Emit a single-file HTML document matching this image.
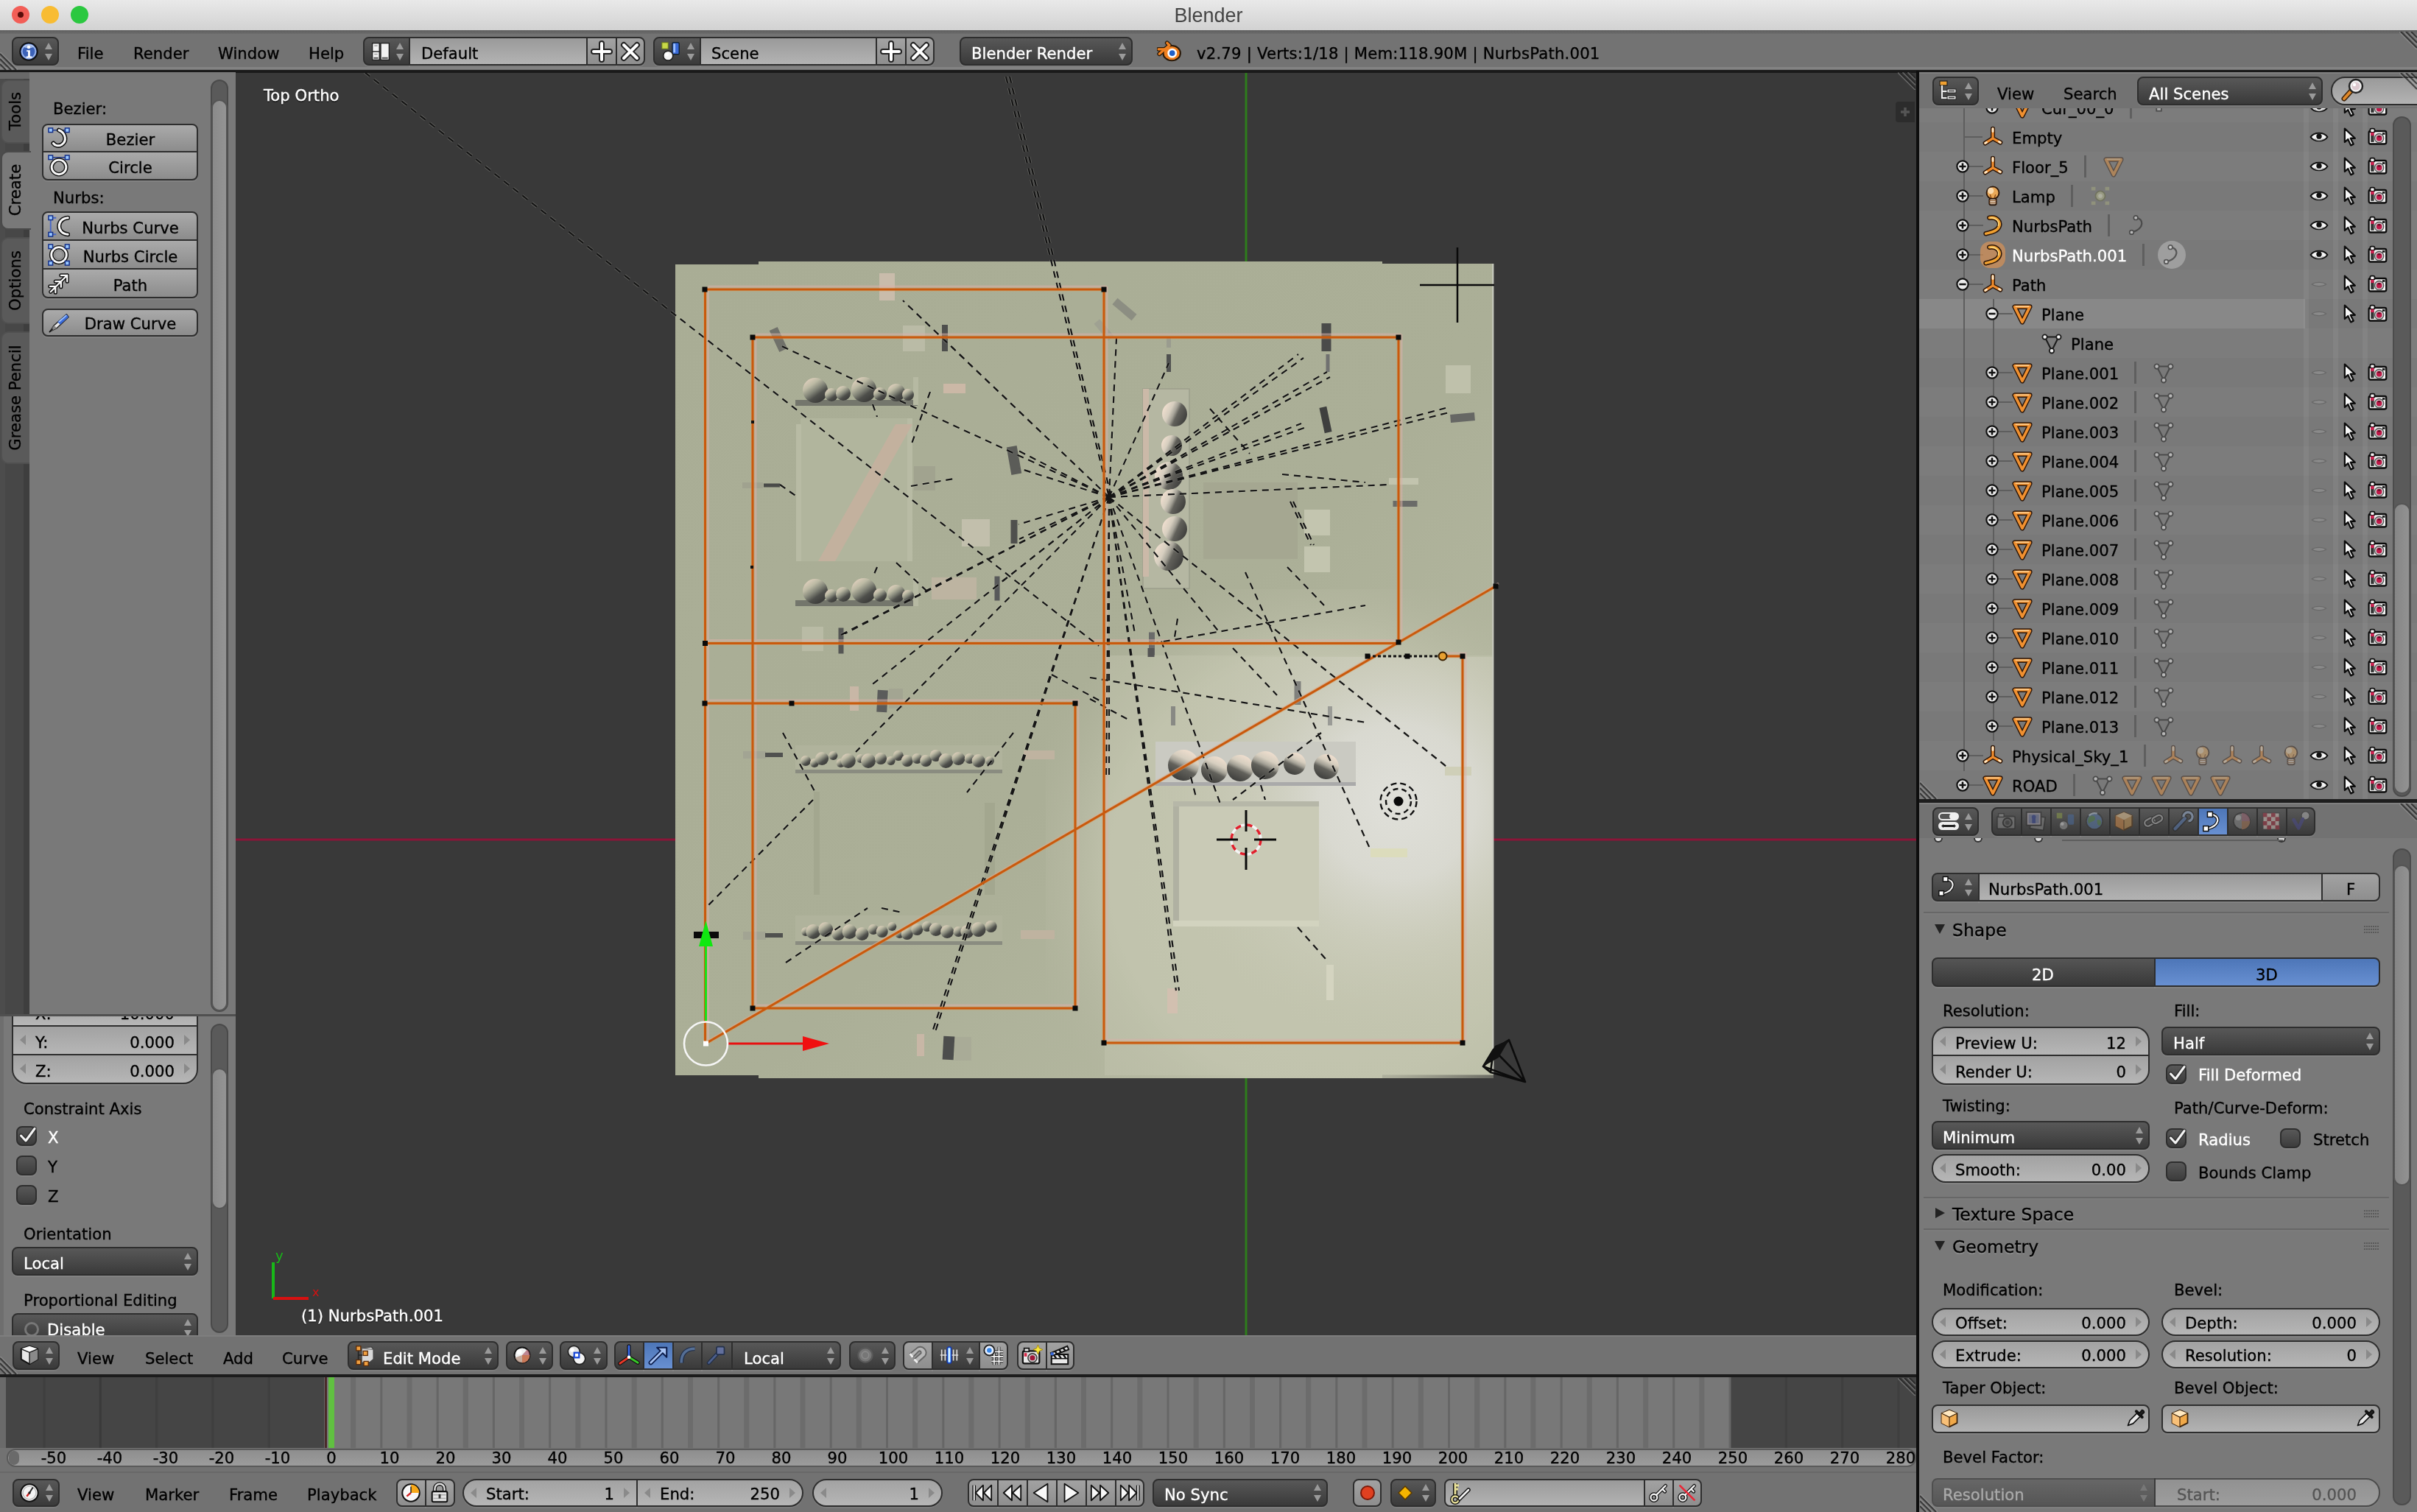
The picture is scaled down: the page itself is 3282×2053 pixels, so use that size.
<!DOCTYPE html><html><head><meta charset="utf-8"><title>Blender</title><style>
html,body{margin:0;padding:0;background:#727272}
body{width:3282px;height:2053px;position:relative;overflow:hidden;font-family:"DejaVu Sans","Liberation Sans",sans-serif;font-size:21.2px;color:#000}
#app{position:absolute;left:0;top:0;width:3282px;height:2053px;overflow:hidden;will-change:transform}
.a{position:absolute}
.t{white-space:nowrap;line-height:normal;-webkit-text-stroke:.35px}
.w{box-sizing:border-box;border:2px solid #2e2e2e;box-shadow:0 2px 0 rgba(255,255,255,.07)}
.tool{background:linear-gradient(#aaa,#8c8c8c)}
.reg{background:linear-gradient(#a2a2a2,#8e8e8e)}
.num{background:linear-gradient(#a2a2a2,#b6b6b6)}
.menu{background:linear-gradient(#585858,#3a3a3a)}
.txt{background:linear-gradient(#9a9a9a,#b3b3b3)}
.radio{background:linear-gradient(#555,#393939)}
.sel{background:linear-gradient(#4d76b8,#6890d2)}
.chk{background:linear-gradient(#585858,#3c3c3c);border-radius:8px}
.dis{opacity:.5}
.sh{text-shadow:0 2px 1px rgba(255,255,255,.18)}
.shd{text-shadow:0 2px 1px rgba(0,0,0,.45)}
</style></head><body><div id="app"><svg class="a" style="left:320px;top:98px;" width="2282" height="1718" viewBox="320 98 2282 1718"><defs><linearGradient id="sph" x1=".12" y1=".12" x2=".88" y2=".88"><stop offset="0" stop-color="#f2e0d0"/><stop offset=".3" stop-color="#d6cebf"/><stop offset=".47" stop-color="#a5a297"/><stop offset=".6" stop-color="#62615b"/><stop offset="1" stop-color="#3c3c3a"/></linearGradient><linearGradient id="sph2" x1=".15" y1=".05" x2=".8" y2=".95"><stop offset="0" stop-color="#e4d2c0"/><stop offset=".28" stop-color="#bcbaa4"/><stop offset=".5" stop-color="#85877a"/><stop offset=".7" stop-color="#4e4f4b"/><stop offset="1" stop-color="#383836"/></linearGradient><radialGradient id="glow" cx="1899" cy="1088" r="330" gradientUnits="userSpaceOnUse"><stop offset="0" stop-color="#e0e0da"/><stop offset=".32" stop-color="#dadad2" stop-opacity=".95"/><stop offset=".6" stop-color="#cfcfc0" stop-opacity=".6"/><stop offset="1" stop-color="#c4c5b0" stop-opacity="0"/></radialGradient><linearGradient id="pl" x1="0" y1="0" x2="1" y2="1"><stop offset="0" stop-color="#a9ad95"/><stop offset=".55" stop-color="#abaf97"/><stop offset="1" stop-color="#babda6"/></linearGradient><radialGradient id="quad" cx="1800" cy="1180" r="420" gradientUnits="userSpaceOnUse"><stop offset="0" stop-color="#c6c8b2"/><stop offset=".7" stop-color="#c2c4ae" stop-opacity=".85"/><stop offset="1" stop-color="#b4b6a0" stop-opacity="0"/></radialGradient></defs><rect x="320" y="98" width="2282" height="1718" fill="#393939"/><rect x="1690.5" y="98" width="3" height="1717" fill="#2e7d1c"/><rect x="320" y="1138.5" width="2282" height="3" fill="#8b1538"/><path d="M917 359 H1030 V355 H1877 V358 H2028 V1459 H1877 V1464 H1030 V1460 H917Z" fill="url(#pl)"/><rect x="1420" y="800" width="608" height="664" fill="url(#quad)"/><rect x="1500" y="890" width="528" height="570" fill="#c3c5af" opacity=".45"/><rect x="1500" y="892" width="528" height="568" fill="url(#glow)"/><rect x="1900" y="480" width="128" height="412" fill="url(#vg)"/><rect x="1500" y="640" width="400" height="232" fill="url(#vg)" opacity=".45"/><rect x="2026" y="358" width="2.5" height="1101" fill="#c9cac0" opacity=".8"/><rect x="1087" y="568" width="148" height="194" fill="#b1b59d"/><rect x="1081" y="576" width="7" height="186" fill="#b8bba4"/><rect x="1232" y="568" width="7" height="194" fill="#b8bba4"/><path d="M1111 762 L1134 762 L1239 576 L1216 576Z" fill="#c5b09f" opacity=".9"/><rect x="1634" y="655" width="128" height="104" fill="#a5a791"/><rect x="1105" y="1075" width="8" height="140" fill="#a3a78f"/><rect x="1337" y="1090" width="14" height="125" fill="#a3a78f"/><rect x="1593" y="1088" width="198" height="167" fill="#c9cab6"/><rect x="1593" y="1088" width="8" height="167" fill="#b0b1a2"/><rect x="1593" y="1088" width="198" height="7" fill="#b6b7a8"/><rect x="1593" y="1250" width="198" height="8" fill="#d2d3bf"/><rect x="1194" y="371" width="21" height="37" fill="#c9bcab"/><rect x="1226" y="442" width="30" height="35" fill="#babba6"/><rect x="1281" y="521" width="30" height="13" fill="#cbb8a6"/><rect x="1241" y="633" width="29" height="33" fill="#a1a38f"/><rect x="1306" y="705" width="38" height="37" fill="#c2bfac"/><rect x="1265" y="784" width="61" height="30" fill="#bdb4a1"/><rect x="1089" y="851" width="29" height="33" fill="#b9bba5"/><rect x="1963" y="496" width="34" height="38" fill="#bfc1ab"/><rect x="1771" y="692" width="35" height="35" fill="#c3c5af"/><rect x="1771" y="742" width="35" height="35" fill="#c3c5af"/><rect x="1886" y="649" width="40" height="9" fill="#c2c4ae"/><rect x="1154" y="932" width="12" height="33" fill="#c8b7a6"/><rect x="1207" y="935" width="19" height="27" fill="#a3a592"/><rect x="1245" y="1404" width="10" height="30" fill="#c8b7a6"/><rect x="1296" y="1408" width="23" height="32" fill="#a9ab97"/><rect x="1390" y="1019" width="42" height="12" fill="#bfb3a0"/><rect x="1386" y="1263" width="46" height="12" fill="#bfb3a0"/><rect x="1962" y="1041" width="36" height="12" fill="#cfcfb8"/><rect x="1861" y="1152" width="50" height="12" fill="#dcdcbc"/><rect x="1585" y="1342" width="14" height="34" fill="#d2c0b0"/><rect x="1801" y="1310" width="10" height="48" fill="#d4d4c0"/><rect x="1009" y="1020" width="31" height="10" fill="#a2a493"/><rect x="1009" y="1265" width="31" height="11" fill="#a2a493"/><rect x="1008" y="655" width="28" height="8" fill="#a0a28f"/><rect x="1080" y="543" width="166" height="8" fill="#74766c"/><rect x="1240" y="512" width="7" height="38" fill="#b6b9a2"/><rect x="1080" y="815" width="166" height="8" fill="#74766c"/><rect x="1240" y="785" width="7" height="38" fill="#b6b9a2"/><rect x="1080" y="1012" width="281" height="36" fill="#b0b39c"/><rect x="1080" y="1045" width="281" height="5" fill="#8a8c80"/><rect x="1080" y="1243" width="281" height="38" fill="#b0b39c"/><rect x="1080" y="1278" width="281" height="5" fill="#8a8c80"/><rect x="1552" y="528" width="63" height="271" fill="#b5b7a2" stroke="#9d9f8c" stroke-width="1.5"/><rect x="1552" y="528" width="8" height="255" fill="#cbb9a8"/><rect x="1569" y="1007" width="272" height="59" fill="#cacac2"/><rect x="1569" y="1062" width="272" height="5" fill="#aaa"/><circle cx="1107" cy="530" r="17" fill="url(#sph2)"/><circle cx="1129" cy="536" r="9" fill="url(#sph2)"/><circle cx="1145" cy="534" r="10" fill="url(#sph2)"/><circle cx="1173" cy="529" r="17" fill="url(#sph2)"/><circle cx="1195" cy="535" r="9" fill="url(#sph2)"/><circle cx="1217" cy="533" r="12" fill="url(#sph2)"/><circle cx="1233" cy="536" r="8" fill="url(#sph2)"/><circle cx="1107" cy="803" r="17" fill="url(#sph2)"/><circle cx="1129" cy="809" r="9" fill="url(#sph2)"/><circle cx="1145" cy="807" r="10" fill="url(#sph2)"/><circle cx="1173" cy="802" r="17" fill="url(#sph2)"/><circle cx="1195" cy="808" r="9" fill="url(#sph2)"/><circle cx="1217" cy="806" r="12" fill="url(#sph2)"/><circle cx="1233" cy="809" r="8" fill="url(#sph2)"/><circle cx="1094" cy="1033" r="7" fill="url(#sph2)"/><circle cx="1105.9" cy="1036" r="6" fill="url(#sph2)"/><circle cx="1116.1000000000001" cy="1030" r="9" fill="url(#sph2)"/><circle cx="1131.4" cy="1026" r="6" fill="url(#sph2)"/><circle cx="1141.6000000000001" cy="1036" r="6" fill="url(#sph2)"/><circle cx="1151.8000000000002" cy="1033" r="10" fill="url(#sph2)"/><circle cx="1168.8000000000002" cy="1030" r="6" fill="url(#sph2)"/><circle cx="1179.0000000000002" cy="1033" r="10" fill="url(#sph2)"/><circle cx="1196.0000000000002" cy="1030" r="8" fill="url(#sph2)"/><circle cx="1209.6000000000001" cy="1033" r="6" fill="url(#sph2)"/><circle cx="1219.8000000000002" cy="1026" r="7" fill="url(#sph2)"/><circle cx="1231.7000000000003" cy="1033" r="8" fill="url(#sph2)"/><circle cx="1245.3000000000002" cy="1030" r="7" fill="url(#sph2)"/><circle cx="1257.2000000000003" cy="1033" r="8" fill="url(#sph2)"/><circle cx="1270.8000000000002" cy="1026" r="8" fill="url(#sph2)"/><circle cx="1284.4" cy="1033" r="10" fill="url(#sph2)"/><circle cx="1301.4" cy="1030" r="9" fill="url(#sph2)"/><circle cx="1316.7" cy="1030" r="7" fill="url(#sph2)"/><circle cx="1328.6000000000001" cy="1033" r="9" fill="url(#sph2)"/><circle cx="1343.9" cy="1033" r="6" fill="url(#sph2)"/><circle cx="1094" cy="1265" r="6" fill="url(#sph2)"/><circle cx="1104.2" cy="1265" r="10" fill="url(#sph2)"/><circle cx="1121.2" cy="1262" r="10" fill="url(#sph2)"/><circle cx="1138.2" cy="1268" r="9" fill="url(#sph2)"/><circle cx="1153.5" cy="1265" r="10" fill="url(#sph2)"/><circle cx="1170.5" cy="1268" r="9" fill="url(#sph2)"/><circle cx="1185.8" cy="1262" r="7" fill="url(#sph2)"/><circle cx="1197.7" cy="1265" r="8" fill="url(#sph2)"/><circle cx="1211.3" cy="1258" r="6" fill="url(#sph2)"/><circle cx="1221.5" cy="1268" r="6" fill="url(#sph2)"/><circle cx="1231.7" cy="1268" r="8" fill="url(#sph2)"/><circle cx="1245.3" cy="1262" r="8" fill="url(#sph2)"/><circle cx="1258.8999999999999" cy="1258" r="7" fill="url(#sph2)"/><circle cx="1270.8" cy="1262" r="9" fill="url(#sph2)"/><circle cx="1286.1" cy="1265" r="9" fill="url(#sph2)"/><circle cx="1301.3999999999999" cy="1265" r="7" fill="url(#sph2)"/><circle cx="1313.3" cy="1265" r="9" fill="url(#sph2)"/><circle cx="1328.6" cy="1262" r="10" fill="url(#sph2)"/><circle cx="1345.6" cy="1258" r="8" fill="url(#sph2)"/><circle cx="1595" cy="562" r="17" fill="url(#sph)" transform="rotate(-20 1595 562)"/><circle cx="1591" cy="605" r="14" fill="url(#sph)" transform="rotate(-20 1591 605)"/><circle cx="1587" cy="646" r="19" fill="url(#sph)" transform="rotate(-20 1587 646)"/><circle cx="1593" cy="681" r="17" fill="url(#sph)" transform="rotate(-20 1593 681)"/><circle cx="1595" cy="718" r="17" fill="url(#sph)" transform="rotate(-20 1595 718)"/><circle cx="1587" cy="755" r="20" fill="url(#sph)" transform="rotate(-20 1587 755)"/><circle cx="1607" cy="1039" r="21" fill="url(#sph)" transform="rotate(70 1607 1039)"/><circle cx="1649" cy="1045" r="18" fill="url(#sph)" transform="rotate(70 1649 1045)"/><circle cx="1684" cy="1043" r="18" fill="url(#sph)" transform="rotate(70 1684 1043)"/><circle cx="1718" cy="1039" r="19" fill="url(#sph)" transform="rotate(70 1718 1039)"/><circle cx="1758" cy="1037" r="15" fill="url(#sph)" transform="rotate(70 1758 1037)"/><circle cx="1801" cy="1041" r="17" fill="url(#sph)" transform="rotate(70 1801 1041)"/><rect x="1051.0" y="445.0" width="12" height="32" fill="#70716a" transform="rotate(-25 1057 461)"/><rect x="1279.0" y="441.0" width="8" height="36" fill="#4e4f4d" transform="rotate(0 1283 459)"/><rect x="1370.0" y="606.0" width="14" height="38" fill="#5b5c58" transform="rotate(-10 1377 625)"/><rect x="1372.5" y="706.0" width="9" height="32" fill="#4f504d" transform="rotate(0 1377 722)"/><rect x="1350.5" y="782.5" width="7" height="33" fill="#58595a" transform="rotate(0 1354 799)"/><rect x="1138.5" y="852.5" width="7" height="35" fill="#555654" transform="rotate(0 1142 870)"/><rect x="1037.0" y="656.5" width="22" height="5" fill="#4a4b49" transform="rotate(0 1048 659)"/><rect x="1521.5" y="403.0" width="11" height="34" fill="#8c8e82" transform="rotate(-50 1527 420)"/><rect x="1584.0" y="481.0" width="6" height="24" fill="#505150" transform="rotate(0 1587 493)"/><rect x="1584.0" y="458.0" width="6" height="14" fill="#9a9c8f" transform="rotate(0 1587 465)"/><rect x="1794.5" y="439.0" width="13" height="38" fill="#4a4b4a" transform="rotate(0 1801 458)"/><rect x="1800.5" y="481.0" width="5" height="24" fill="#707170" transform="rotate(0 1803 493)"/><rect x="1795.0" y="552.5" width="10" height="35" fill="#3e3f3e" transform="rotate(-12 1800 570)"/><rect x="1969.5" y="561.5" width="33" height="11" fill="#666764" transform="rotate(-5 1986 567)"/><rect x="1891.5" y="680.0" width="33" height="8" fill="#6a6b68" transform="rotate(0 1908 684)"/><rect x="1560.0" y="858.5" width="8" height="31" fill="#6a6b6a" transform="rotate(0 1564 874)"/><rect x="1039.0" y="1022.0" width="24" height="6" fill="#50514f" transform="rotate(0 1051 1025)"/><rect x="1039.0" y="1267.0" width="24" height="6" fill="#50514f" transform="rotate(0 1051 1270)"/><rect x="1191.0" y="937.0" width="14" height="30" fill="#5b5c5b" transform="rotate(3 1198 952)"/><rect x="1280.5" y="1407.0" width="15" height="32" fill="#4c4d4c" transform="rotate(3 1288 1423)"/><rect x="1558.5" y="880.0" width="9" height="12" fill="#555" transform="rotate(0 1563 886)"/><rect x="1590.0" y="959.0" width="6" height="26" fill="#888984" transform="rotate(0 1593 972)"/><rect x="1757.5" y="925.0" width="9" height="32" fill="#80817d" transform="rotate(0 1762 941)"/><rect x="1803.0" y="959.0" width="6" height="26" fill="#9a9b96" transform="rotate(0 1806 972)"/><rect x="1494.0" y="433.0" width="10" height="30" fill="#9fa192" transform="rotate(-40 1499 448)"/><path d="M957.5 393H1499 M957.5 393V1417 M1022 458H1899 M1022 458V1370 M1499 393V1416 M1899 458V872 M957.5 873.5H1899 M957 955H1460V1369H1022 M1499 1416H1986V891H1959 M958 1417L2031 796" transform="translate(4,-4)" stroke="#d8b0a8" stroke-width="3" fill="none" opacity=".55"/><path d="M495 98L1492 877M1366 104L1506 675M1371 104L1509 675M1506 675L1057 468M1506 675L1283 462M1506 675L1226 408M1506 675L1248 807M1506 675L1142 862M1506 675L1763 481M1506 675L1802 505M1506 675L1765 534M1506 675L1767 575M1506 675L1963 554M1506 675L1886 658M1506 675L1587 493M1506 675L1516 459M1506 675L1962 1039M1506 675L1597 1345M1506 675L1601 1345M1506 675L1265 1404M1506 675L1269 1404M1506 675L1658 1094M1506 675L1162 1021M1506 675L1181 932M1506 675L1506 1055M1506 675L1502 1055M1506 675L1541 860M1506 675L1657 860M1506 675L1383 612M1506 675L1384 636M1506 675L1383 712M1506 675L1384 732M1506 675L1360 790M1506 675L1148 860M1506 675L1770 486M1506 675L1806 512M1506 675L1771 581M1506 675L1968 560M1506 675L1968 1044M1263 532L1237 605M1237 660L1295 650M1059 658L1083 675M1185 549L1191 566M1191 770L1185 784M1217 764L1259 803M1643 555L1697 616M1741 644L1854 655M1752 681L1780 740M1756 681L1784 740M1748 770L1798 822M1691 777L1861 1154M1564 874L1854 822M1063 995L1106 1074M1104 1086L960 1231M1376 995L1313 1076M1428 916L1500 955M1067 1307L1178 1233M1480 920L1855 981M1480 949L1532 977M1674 880L1734 944M1794 995L1674 1086M1762 1259L1801 1303M1617 1055L1625 1086M1712 1066L1718 1086M1599 840L1595 865M1197 1233L1225 1239" stroke="#dcdcd0" stroke-width="4" fill="none" stroke-dasharray="9 7" opacity=".25"/><path d="M495 98L1492 877M1366 104L1506 675M1371 104L1509 675M1506 675L1057 468M1506 675L1283 462M1506 675L1226 408M1506 675L1248 807M1506 675L1142 862M1506 675L1763 481M1506 675L1802 505M1506 675L1765 534M1506 675L1767 575M1506 675L1963 554M1506 675L1886 658M1506 675L1587 493M1506 675L1516 459M1506 675L1962 1039M1506 675L1597 1345M1506 675L1601 1345M1506 675L1265 1404M1506 675L1269 1404M1506 675L1658 1094M1506 675L1162 1021M1506 675L1181 932M1506 675L1506 1055M1506 675L1502 1055M1506 675L1541 860M1506 675L1657 860M1506 675L1383 612M1506 675L1384 636M1506 675L1383 712M1506 675L1384 732M1506 675L1360 790M1506 675L1148 860M1506 675L1770 486M1506 675L1806 512M1506 675L1771 581M1506 675L1968 560M1506 675L1968 1044M1263 532L1237 605M1237 660L1295 650M1059 658L1083 675M1185 549L1191 566M1191 770L1185 784M1217 764L1259 803M1643 555L1697 616M1741 644L1854 655M1752 681L1780 740M1756 681L1784 740M1748 770L1798 822M1691 777L1861 1154M1564 874L1854 822M1063 995L1106 1074M1104 1086L960 1231M1376 995L1313 1076M1428 916L1500 955M1067 1307L1178 1233M1480 920L1855 981M1480 949L1532 977M1674 880L1734 944M1794 995L1674 1086M1762 1259L1801 1303M1617 1055L1625 1086M1712 1066L1718 1086M1599 840L1595 865M1197 1233L1225 1239" stroke="#151515" stroke-width="2.2" fill="none" stroke-dasharray="9 7"/><path d="M957.5 393H1499 M957.5 393V1417 M1022 458H1899 M1022 458V1370 M1499 393V1416 M1899 458V872 M957.5 873.5H1899 M957 955H1460V1369H1022 M1499 1416H1986V891H1959 M958 1417L2031 796" stroke="#d8a060" stroke-width="5" fill="none" opacity=".45"/><path d="M957.5 393H1499 M957.5 393V1417 M1022 458H1899 M1022 458V1370 M1499 393V1416 M1899 458V872 M957.5 873.5H1899 M957 955H1460V1369H1022 M1499 1416H1986V891H1959 M958 1417L2031 796" stroke="#c9590d" stroke-width="3" fill="none"/><path d="M1857 891H1959" stroke="#111" stroke-width="3" stroke-dasharray="4 3"/><circle cx="1959" cy="891" r="5.5" fill="#e8a030" stroke="#3a2000" stroke-width="2"/><rect x="953.5" y="389.5" width="7" height="7" fill="#0a0a0a"/><rect x="1495.5" y="389.5" width="7" height="7" fill="#0a0a0a"/><rect x="1018.5" y="454.5" width="7" height="7" fill="#0a0a0a"/><rect x="1895.5" y="454.5" width="7" height="7" fill="#0a0a0a"/><rect x="1895.5" y="868.5" width="7" height="7" fill="#0a0a0a"/><rect x="954.0" y="870.0" width="7" height="7" fill="#0a0a0a"/><rect x="953.5" y="951.5" width="7" height="7" fill="#0a0a0a"/><rect x="1456.5" y="951.5" width="7" height="7" fill="#0a0a0a"/><rect x="1456.5" y="1365.5" width="7" height="7" fill="#0a0a0a"/><rect x="1018.5" y="1365.5" width="7" height="7" fill="#0a0a0a"/><rect x="1495.5" y="1412.5" width="7" height="7" fill="#0a0a0a"/><rect x="1982.5" y="1412.5" width="7" height="7" fill="#0a0a0a"/><rect x="1982.5" y="887.5" width="7" height="7" fill="#0a0a0a"/><rect x="1853.5" y="887.5" width="7" height="7" fill="#0a0a0a"/><rect x="1907.5" y="887.5" width="7" height="7" fill="#0a0a0a"/><rect x="2027.5" y="792.5" width="7" height="7" fill="#0a0a0a"/><rect x="1071.5" y="951.5" width="7" height="7" fill="#0a0a0a"/><rect x="1020" y="571" width="4" height="4" fill="#111"/><rect x="1019" y="768" width="4" height="4" fill="#111"/><path d="M1928 387H2029M1979 336V438" stroke="#0a0a0a" stroke-width="2.5"/><circle cx="1692" cy="1140" r="20" fill="none" stroke="#f4f4f4" stroke-width="3.5"/><circle cx="1692" cy="1140" r="20" fill="none" stroke="#e0202c" stroke-width="3.5" stroke-dasharray="8 7.7"/><path d="M1652 1140H1681M1703 1140H1733M1692 1100V1129M1692 1151V1181" stroke="#0a0a0a" stroke-width="3"/><circle cx="1899" cy="1088" r="6.5" fill="#0a0a0a"/><circle cx="1899" cy="1088" r="17" fill="none" stroke="#111" stroke-width="2.4" stroke-dasharray="7 5"/><circle cx="1899" cy="1088" r="24.5" fill="none" stroke="#111" stroke-width="2.4" stroke-dasharray="8 5"/><path d="M2014 1448L2049 1412L2071 1469ZM2014 1448L2028 1425L2049 1412M2014 1448L2024 1456L2071 1469M2028 1425L2024 1456M2028 1425 L2071 1469" stroke="#0c0c0c" stroke-width="2.6" fill="none" stroke-linejoin="round"/><path d="M2014 1448L2030 1420L2049 1412L2035 1436Z" fill="#111"/><rect x="942" y="1265" width="34" height="9" fill="#0a0a0a"/><path d="M958.5 1386V1284" stroke="#18e018" stroke-width="3"/><path d="M949 1285L968 1285L958.5 1250Z" fill="#10e810"/><path d="M989 1417H1092" stroke="#e81010" stroke-width="3"/><path d="M1090 1407V1427L1126 1417Z" fill="#f01010"/><circle cx="958.5" cy="1417" r="29.5" fill="none" stroke="#f6f6f6" stroke-width="2.6"/><rect x="955" y="1413.5" width="7" height="7" fill="#fff"/><path d="M371 1763V1714" stroke="#18b818" stroke-width="4"/><path d="M371 1763H419" stroke="#d81010" stroke-width="4"/><text x="374" y="1711" font-size="18" fill="#18b818" font-family="DejaVu Sans,sans-serif">y</text><text x="424" y="1760" font-size="16" fill="#d81010" font-family="DejaVu Sans,sans-serif">x</text></svg><div class="a t shd" style="left:358px;top:117px;color:#fff;">Top Ortho</div><div class="a t shd" style="left:409px;top:1774px;color:#fff;">(1) NurbsPath.001</div><div class="a " style="left:2574px;top:138px;width:26px;height:28px;background:#2c2c2c;border-radius:4px 0 0 4px"></div><svg class="a" style="left:2579px;top:144px;" width="16" height="16" viewBox="0 0 16 16"><path d="M8 2V14M2 8H14" stroke="#555" stroke-width="3.5"/></svg><div class="a " style="left:0px;top:0px;width:3282px;height:41px;background:linear-gradient(#e9e9e9,#d2d2d2)"></div><div class="a " style="left:16px;top:8px;width:24px;height:24px;border-radius:12px;background:#f25e57"></div><div class="a " style="left:56px;top:8px;width:24px;height:24px;border-radius:12px;background:#f8bc33"></div><div class="a " style="left:96px;top:8px;width:24px;height:24px;border-radius:12px;background:#2bc840"></div><div class="a " style="left:24px;top:16px;width:8px;height:8px;border-radius:4px;background:#5a0d0a"></div><div class="a t" style="left:1241px;width:800px;text-align:center;top:6px;-webkit-text-stroke:0;font-family:'Liberation Sans',sans-serif;font-size:27px;color:#444">Blender</div><div class="a " style="left:0px;top:41px;width:3282px;height:55px;background:#737373"></div><div class="a " style="left:0px;top:41px;width:3282px;height:5px;background:linear-gradient(#5e5e5e,#6c6c6c)"></div><div class="a " style="left:0px;top:91px;width:3282px;height:3px;background:#838383"></div><div class="a " style="left:0px;top:95px;width:3282px;height:4px;background:#1a1a1a"></div><div class="a w menu" style="left:16px;top:50px;width:64px;height:39px;border-radius:8px;"></div><svg class="a" style="left:60px;top:57px" width="12" height="26" viewBox="0 0 12 26"><path d="M6 1 L11 10 L1 10Z M6 25 L11 16 L1 16Z" fill="#9a9a9a"/></svg><svg class="a" style="left:24px;top:55px;" width="30" height="30" viewBox="0 0 32 32"><circle cx="16" cy="16" r="12.5" fill="#3c62b8" stroke="#111" stroke-width="2.2"/><circle cx="16" cy="16" r="10" fill="none" stroke="#9ab4ea" stroke-width="2"/><path d="M8 9A11 11 0 0 1 24 9Q16 13 8 9Z" fill="#c8d8f8" opacity=".7"/><circle cx="16" cy="9.5" r="2.4" fill="#fff"/><path d="M13 14H18V23H20.5V25H12.5V23H15V16H13Z" fill="#fff"/></svg><div class="a t " style="left:105px;top:60px;">File</div><div class="a t " style="left:181px;top:60px;">Render</div><div class="a t " style="left:296px;top:60px;">Window</div><div class="a t " style="left:419px;top:60px;">Help</div><div class="a w menu" style="left:493px;top:50px;width:64px;height:39px;border-radius:8px 0 0 8px;"></div><svg class="a" style="left:537px;top:57px" width="12" height="26" viewBox="0 0 12 26"><path d="M6 1 L11 10 L1 10Z M6 25 L11 16 L1 16Z" fill="#9a9a9a"/></svg><svg class="a" style="left:503px;top:56px;" width="28" height="28" viewBox="0 0 32 32"><rect x="3" y="3" width="11" height="26" fill="#f2f2f2" stroke="#222" stroke-width="1.6"/><rect x="16" y="3" width="13" height="26" fill="#f2f2f2" stroke="#222" stroke-width="1.6"/><path d="M3 16H14" stroke="#222" stroke-width="1.6"/><path d="M5 26H12M18 26H27" stroke="#555" stroke-width="2.5"/><path d="M6 7H11M6 20H11" stroke="#aaa" stroke-width="2"/></svg><div class="a w txt" style="left:555px;top:50px;width:243px;height:39px;border-radius:0;"></div><div class="a t " style="left:572px;top:60px;">Default</div><div class="a w reg" style="left:796px;top:50px;width:42px;height:39px;border-radius:0;"></div><div class="a w reg" style="left:836px;top:50px;width:40px;height:39px;border-radius:0 8px 8px 0;"></div><div class="a w menu" style="left:887px;top:50px;width:65px;height:39px;border-radius:8px 0 0 8px;"></div><svg class="a" style="left:932px;top:57px" width="12" height="26" viewBox="0 0 12 26"><path d="M6 1 L11 10 L1 10Z M6 25 L11 16 L1 16Z" fill="#9a9a9a"/></svg><svg class="a" style="left:896px;top:55px;" width="30" height="30" viewBox="0 0 32 32"><rect x="3" y="3" width="9" height="9" fill="#c8d848" stroke="#6a7a18" stroke-width="1"/><rect x="18" y="3" width="10" height="17" rx="2" fill="#3a6ad8" stroke="#123" stroke-width="1.5"/><rect x="19.5" y="4.5" width="3" height="13" fill="#9ac0ff"/><circle cx="12" cy="22" r="7" fill="#f4f4f4" stroke="#222" stroke-width="1.8"/><circle cx="10" cy="20" r="2.8" fill="#fff"/></svg><div class="a w txt" style="left:950px;top:50px;width:241px;height:39px;border-radius:0;"></div><div class="a t " style="left:966px;top:60px;">Scene</div><div class="a w reg" style="left:1189px;top:50px;width:42px;height:39px;border-radius:0;"></div><div class="a w reg" style="left:1229px;top:50px;width:40px;height:39px;border-radius:0 8px 8px 0;"></div><svg class="a" style="left:802px;top:55px;" width="30" height="30" viewBox="0 0 30 30"><path d="M15 4V26M4 15H26" stroke="#222" stroke-width="8" stroke-linecap="round"/><path d="M15 4V26M4 15H26" stroke="#fff" stroke-width="4" stroke-linecap="round"/></svg><svg class="a" style="left:1195px;top:55px;" width="30" height="30" viewBox="0 0 30 30"><path d="M15 4V26M4 15H26" stroke="#222" stroke-width="8" stroke-linecap="round"/><path d="M15 4V26M4 15H26" stroke="#fff" stroke-width="4" stroke-linecap="round"/></svg><svg class="a" style="left:841px;top:55px;" width="30" height="30" viewBox="0 0 30 30"><path d="M6 6L24 24M24 6L6 24" stroke="#222" stroke-width="8" stroke-linecap="round"/><path d="M6 6L24 24M24 6L6 24" stroke="#fff" stroke-width="4" stroke-linecap="round"/></svg><svg class="a" style="left:1234px;top:55px;" width="30" height="30" viewBox="0 0 30 30"><path d="M6 6L24 24M24 6L6 24" stroke="#222" stroke-width="8" stroke-linecap="round"/><path d="M6 6L24 24M24 6L6 24" stroke="#fff" stroke-width="4" stroke-linecap="round"/></svg><div class="a w menu" style="left:1303px;top:50px;width:235px;height:39px;border-radius:8px;"></div><div class="a t " style="left:1319px;top:60px;color:#fff;">Blender Render</div><svg class="a" style="left:1518px;top:57px" width="12" height="26" viewBox="0 0 12 26"><path d="M6 1 L11 10 L1 10Z M6 25 L11 16 L1 16Z" fill="#9a9a9a"/></svg><svg class="a" style="left:1571px;top:53px;" width="34" height="34" viewBox="0 0 32 32"><path d="M3 19L16 8L13 5" stroke="#2a1a0a" stroke-width="5.5" fill="none" stroke-linecap="round" stroke-linejoin="round"/><path d="M2 13H14" stroke="#2a1a0a" stroke-width="5.5" stroke-linecap="round"/><ellipse cx="19" cy="18" rx="11" ry="9.5" fill="#f08020" stroke="#2a1a0a" stroke-width="2"/><path d="M3 19L16 8L13 5" stroke="#f08020" stroke-width="3" fill="none" stroke-linecap="round" stroke-linejoin="round"/><path d="M2 13H14" stroke="#f08020" stroke-width="3" stroke-linecap="round"/><circle cx="19.5" cy="18" r="6" fill="#fff"/><circle cx="19.5" cy="18" r="3.6" fill="#2060c8"/></svg><div class="a t " style="left:1625px;top:60px;letter-spacing:.2px">v2.79 | Verts:1/18 | Mem:118.90M | NurbsPath.001</div><div class="a " style="left:0px;top:98px;width:320px;height:1280px;background:#797979"></div><div class="a " style="left:0px;top:98px;width:40px;height:1280px;background:#474747"></div><div class="a " style="left:0px;top:98px;width:7px;height:1280px;background:#4c4c4c"></div><div class="a " style="left:32px;top:98px;width:8px;height:1280px;background:#3e3e3e"></div><div class="a " style="left:0px;top:98px;width:40px;height:9px;background:#686868"></div><div class="a " style="left:1px;top:108px;width:39px;height:87px;background:#5a5a5a;border-radius:10px 0 0 10px;border:2px solid #505050;border-right:none;box-sizing:border-box"></div><div class="a t" style="left:-129.5px;top:136px;width:300px;height:30px;line-height:30px;text-align:center;transform:rotate(-90deg);color:#000">Tools</div><div class="a " style="left:1px;top:205px;width:41px;height:107px;background:#797979;border-radius:10px 0 0 10px;border:2px solid #4a4a4a;border-right:none;box-sizing:border-box"></div><div class="a t" style="left:-129.5px;top:243px;width:300px;height:30px;line-height:30px;text-align:center;transform:rotate(-90deg);color:#000">Create</div><div class="a " style="left:1px;top:322px;width:39px;height:118px;background:#5a5a5a;border-radius:10px 0 0 10px;border:2px solid #505050;border-right:none;box-sizing:border-box"></div><div class="a t" style="left:-129.5px;top:366px;width:300px;height:30px;line-height:30px;text-align:center;transform:rotate(-90deg);color:#000">Options</div><div class="a " style="left:1px;top:450px;width:39px;height:180px;background:#5a5a5a;border-radius:10px 0 0 10px;border:2px solid #505050;border-right:none;box-sizing:border-box"></div><div class="a t" style="left:-129.5px;top:525px;width:300px;height:30px;line-height:30px;text-align:center;transform:rotate(-90deg);color:#000">Grease Pencil</div><div class="a " style="left:286px;top:108px;width:24px;height:1266px;background:#5a5a5a;border-radius:12px;border:2px solid #4a4a4a;box-sizing:border-box"></div><div class="a " style="left:287px;top:135px;width:22px;height:1238px;background:linear-gradient(90deg,#8a8a8a,#949494);border-radius:11px;border:2px solid #555;box-sizing:border-box"></div><div class="a t " style="left:72px;top:135px;">Bezier:</div><div class="a w tool" style="left:57px;top:168px;width:212px;height:39px;border-radius:8px 8px 0 0;"></div><svg class="a" style="left:65px;top:172.5px;" width="30" height="30" viewBox="0 0 32 32"><path d="M3.5 4H28.5" stroke="#14308a" stroke-width="1.4"/><path d="M16 4C26 8 28 20 20 25C15 28 10 26 8 23" stroke="#111" stroke-width="6.5" fill="none" stroke-linecap="round"/><path d="M16 4C26 8 28 20 20 25C15 28 10 26 8 23" stroke="#fafafa" stroke-width="3.2" fill="none" stroke-linecap="round"/><g fill="#9ac8ff" stroke="#14308a" stroke-width="1.6"><rect x="1" y="1" width="6" height="6"/><rect x="25" y="1" width="6" height="6"/></g></svg><div class="a t " style="left:-223px;width:800px;text-align:center;top:177px;">Bezier</div><div class="a w tool" style="left:57px;top:205px;width:212px;height:40px;border-radius:0 0 8px 8px;"></div><svg class="a" style="left:65px;top:210px;" width="30" height="30" viewBox="0 0 32 32"><path d="M3.5 4H28.5" stroke="#14308a" stroke-width="1.4"/><circle cx="16" cy="18" r="10.5" fill="none" stroke="#111" stroke-width="6"/><circle cx="16" cy="18" r="10.5" fill="none" stroke="#fafafa" stroke-width="3"/><g fill="#9ac8ff" stroke="#14308a" stroke-width="1.6"><rect x="1" y="1" width="6" height="6"/><rect x="25" y="1" width="6" height="6"/></g></svg><div class="a t " style="left:-223px;width:800px;text-align:center;top:215px;">Circle</div><div class="a t " style="left:72px;top:256px;">Nurbs:</div><div class="a w tool" style="left:57px;top:287px;width:212px;height:40px;border-radius:8px 8px 0 0;"></div><svg class="a" style="left:65px;top:292px;" width="30" height="30" viewBox="0 0 32 32"><path d="M4 4V28M4 4H12M4 28H12" stroke="#4868c8" stroke-width="2" fill="none"/><path d="M29 4C12 5 12 27 29 28" stroke="#111" stroke-width="6.5" fill="none" stroke-linecap="round"/><path d="M29 4C12 5 12 27 29 28" stroke="#fafafa" stroke-width="3.2" fill="none" stroke-linecap="round"/><g fill="#9ac8ff" stroke="#14308a" stroke-width="1.6"><rect x="1" y="1" width="6" height="6"/><rect x="1" y="25" width="6" height="6"/></g></svg><div class="a t " style="left:-223px;width:800px;text-align:center;top:297px;">Nurbs Curve</div><div class="a w tool" style="left:57px;top:325px;width:212px;height:41px;border-radius:0;"></div><svg class="a" style="left:65px;top:330.5px;" width="30" height="30" viewBox="0 0 32 32"><circle cx="16" cy="16" r="11" fill="none" stroke="#111" stroke-width="6"/><circle cx="16" cy="16" r="11" fill="none" stroke="#fafafa" stroke-width="3"/><circle cx="16" cy="16" r="6" fill="none" stroke="#888" stroke-width="1.2"/><g fill="#9ac8ff" stroke="#14308a" stroke-width="1.6"><rect x="1" y="1" width="6" height="6"/><rect x="25" y="1" width="6" height="6"/><rect x="1" y="25" width="6" height="6"/><rect x="25" y="25" width="6" height="6"/></g></svg><div class="a t " style="left:-223px;width:800px;text-align:center;top:336px;">Nurbs Circle</div><div class="a w tool" style="left:57px;top:364px;width:212px;height:41px;border-radius:0 0 8px 8px;"></div><svg class="a" style="left:65px;top:369.5px;" width="30" height="30" viewBox="0 0 32 32"><g stroke-linecap="round" stroke-linejoin="round" fill="none"><path d="M4 28L28 4M19 4H28V13M11 13H19V21M3 20H11M11 20V29" stroke="#111" stroke-width="5.5"/><path d="M4 28L28 4M19 4H28V13M11 13H19V21M3 20H11M11 20V29" stroke="#fafafa" stroke-width="2.4"/></g></svg><div class="a t " style="left:-223px;width:800px;text-align:center;top:375px;">Path</div><div class="a w tool" style="left:57px;top:419px;width:212px;height:38px;border-radius:8px;"></div><svg class="a" style="left:65px;top:423px;" width="30" height="30" viewBox="0 0 32 32"><path d="M3 29L9 20L27 4L30 8L13 24Z" fill="#e8e8e8" stroke="#222" stroke-width="1.6" stroke-linejoin="round"/><path d="M14 15L27 4L30 8L18 19Z" fill="#3a6ad8"/><path d="M16 15L27 5.5" stroke="#9ac0ff" stroke-width="2"/><path d="M3 29L9 20L13 24Z" fill="#888"/><path d="M2 30L7 25" stroke="#111" stroke-width="1.6"/></svg><div class="a t " style="left:-223px;width:800px;text-align:center;top:427px;">Draw Curve</div><div class="a " style="left:0px;top:1377px;width:320px;height:3px;background:#505050"></div><div class="a " style="left:0px;top:1380px;width:320px;height:435px;background:#797979"></div><div class="a " style="left:0px;top:1380px;width:5px;height:435px;background:#6e6e6e"></div><div class="a" style="left:0px;top:1380px;width:320px;height:435px;overflow:hidden;"><div class="a w num" style="left:16px;top:-27px;width:253px;height:41px;border-radius:0;"></div><div class="a t " style="left:48px;top:-16px;">X:</div><div class="a t " style="left:-763px;width:1000px;text-align:right;top:-16px;">10.000</div><svg class="a" style="left:26px;top:-14px;" width="10" height="14" viewBox="0 0 10 14"><path d="M9 0L1 7L9 14Z" fill="#8a8a8a"/></svg><svg class="a" style="left:249px;top:-14px;" width="10" height="14" viewBox="0 0 10 14"><path d="M1 0L9 7L1 14Z" fill="#8a8a8a"/></svg><div class="a w num" style="left:16px;top:12px;width:253px;height:41px;border-radius:0;"></div><div class="a t " style="left:48px;top:23px;">Y:</div><div class="a t " style="left:-763px;width:1000px;text-align:right;top:23px;">0.000</div><svg class="a" style="left:26px;top:25px;" width="10" height="14" viewBox="0 0 10 14"><path d="M9 0L1 7L9 14Z" fill="#8a8a8a"/></svg><svg class="a" style="left:249px;top:25px;" width="10" height="14" viewBox="0 0 10 14"><path d="M1 0L9 7L1 14Z" fill="#8a8a8a"/></svg><div class="a w num" style="left:16px;top:51px;width:253px;height:41px;border-radius:0 0 20px 20px;"></div><div class="a t " style="left:48px;top:62px;">Z:</div><div class="a t " style="left:-763px;width:1000px;text-align:right;top:62px;">0.000</div><svg class="a" style="left:26px;top:64px;" width="10" height="14" viewBox="0 0 10 14"><path d="M9 0L1 7L9 14Z" fill="#8a8a8a"/></svg><svg class="a" style="left:249px;top:64px;" width="10" height="14" viewBox="0 0 10 14"><path d="M1 0L9 7L1 14Z" fill="#8a8a8a"/></svg><div class="a t " style="left:32px;top:113px;">Constraint Axis</div><div class="a w chk" style="left:22px;top:149px;width:28px;height:27px;border-radius:8px;border-radius:8px"></div><svg class="a" style="left:24px;top:141px;" width="34" height="34" viewBox="0 0 34 34"><path d="M4.5 21L11 28L23 11.5" stroke="#222" stroke-width="6" fill="none" stroke-linecap="round" stroke-linejoin="round" opacity=".5"/><path d="M4.5 21L11 28L23 11.5" stroke="#f4f4f4" stroke-width="3" fill="none" stroke-linecap="round" stroke-linejoin="round"/></svg><div class="a t " style="left:65px;top:152px;color:#fff;">X</div><div class="a w chk" style="left:22px;top:189px;width:28px;height:27px;border-radius:8px;border-radius:8px"></div><div class="a t " style="left:65px;top:192px;">Y</div><div class="a w chk" style="left:22px;top:229px;width:28px;height:27px;border-radius:8px;border-radius:8px"></div><div class="a t " style="left:65px;top:232px;">Z</div><div class="a t " style="left:32px;top:283px;">Orientation</div><div class="a w menu" style="left:16px;top:313px;width:253px;height:39px;border-radius:8px;"></div><div class="a t " style="left:32px;top:323px;color:#fff;">Local</div><svg class="a" style="left:249px;top:320px" width="12" height="26" viewBox="0 0 12 26"><path d="M6 1 L11 10 L1 10Z M6 25 L11 16 L1 16Z" fill="#9a9a9a"/></svg><div class="a t " style="left:32px;top:373px;">Proportional Editing</div><div class="a w menu" style="left:16px;top:403px;width:253px;height:39px;border-radius:8px;"></div><div class="a t " style="left:64px;top:413px;color:#fff;">Disable</div><svg class="a" style="left:249px;top:410px" width="12" height="26" viewBox="0 0 12 26"><path d="M6 1 L11 10 L1 10Z M6 25 L11 16 L1 16Z" fill="#9a9a9a"/></svg><div class="a " style="left:33px;top:415px;width:20px;height:20px;border-radius:10px;border:3px solid #777;box-sizing:border-box"></div><div class="a " style="left:286px;top:10px;width:24px;height:420px;background:#5a5a5a;border-radius:12px;border:2px solid #4a4a4a;box-sizing:border-box"></div><div class="a " style="left:287px;top:70px;width:22px;height:192px;background:linear-gradient(90deg,#8a8a8a,#949494);border-radius:11px;border:2px solid #555;box-sizing:border-box"></div></div><div class="a " style="left:0px;top:1813px;width:2602px;height:54px;background:#727272"></div><div class="a " style="left:0px;top:1813px;width:2602px;height:2px;background:#7e7e7e"></div><div class="a " style="left:0px;top:1866px;width:2602px;height:4px;background:#1c1c1c"></div><div class="a w menu" style="left:17px;top:1821px;width:64px;height:39px;border-radius:8px;"></div><svg class="a" style="left:61px;top:1828px" width="12" height="26" viewBox="0 0 12 26"><path d="M6 1 L11 10 L1 10Z M6 25 L11 16 L1 16Z" fill="#9a9a9a"/></svg><svg class="a" style="left:25px;top:1825px;" width="30" height="30" viewBox="0 0 32 32"><path d="M16 3L28 7V22L16 29L4 22V7Z" fill="#e8e8e8" stroke="#111" stroke-width="2.2" stroke-linejoin="round"/><path d="M16 12V29L28 22V7Z" fill="#8a8a8a"/><path d="M4 7L16 12L28 7L16 3Z" fill="#fafafa"/><path d="M4 7L16 12L28 7M16 12V29" stroke="#111" stroke-width="1.4" fill="none"/></svg><div class="a t " style="left:105px;top:1832px;">View</div><div class="a t " style="left:197px;top:1832px;">Select</div><div class="a t " style="left:303px;top:1832px;">Add</div><div class="a t " style="left:383px;top:1832px;">Curve</div><div class="a w menu" style="left:472px;top:1821px;width:205px;height:39px;border-radius:8px;"></div><div class="a t " style="left:520px;top:1832px;color:#fff;">Edit Mode</div><svg class="a" style="left:657px;top:1828px" width="12" height="26" viewBox="0 0 12 26"><path d="M6 1 L11 10 L1 10Z M6 25 L11 16 L1 16Z" fill="#9a9a9a"/></svg><svg class="a" style="left:480px;top:1825px;" width="30" height="30" viewBox="0 0 32 32"><path d="M12 6L26 4L29 8V22L24 26L12 27Z" fill="#d8d8d8" stroke="#444" stroke-width="1.6"/><path d="M12 6V27M12 6L29 8" stroke="#666" stroke-width="1.2"/><path d="M7 7V26M7 16H13" stroke="#222" stroke-width="1.6"/><g fill="#f0a040" stroke="#5a2a08" stroke-width="1.4"><rect x="4" y="3" width="6.5" height="6.5"/><rect x="4" y="23" width="6.5" height="6.5"/><rect x="14" y="10" width="6.5" height="6.5"/><rect x="15" y="25" width="6.5" height="6.5"/></g></svg><div class="a w menu" style="left:687px;top:1821px;width:64px;height:39px;border-radius:8px;"></div><svg class="a" style="left:731px;top:1828px" width="12" height="26" viewBox="0 0 12 26"><path d="M6 1 L11 10 L1 10Z M6 25 L11 16 L1 16Z" fill="#9a9a9a"/></svg><svg class="a" style="left:695px;top:1826px;" width="28" height="28" viewBox="0 0 32 32"><circle cx="16" cy="16" r="12" fill="#f0f0f0" stroke="#111" stroke-width="2.2"/><path d="M16 16H28A12 12 0 0 1 16 28Z" fill="#c87858"/><path d="M16 16V28A12 12 0 0 1 5 20Z" fill="#b89888" opacity=".8"/><path d="M16 16H28A12 12 0 0 0 24 7Z" fill="#a85868" opacity=".7"/><circle cx="11.5" cy="11" r="4" fill="#fff"/></svg><div class="a w menu" style="left:760px;top:1821px;width:65px;height:39px;border-radius:8px;"></div><svg class="a" style="left:805px;top:1828px" width="12" height="26" viewBox="0 0 12 26"><path d="M6 1 L11 10 L1 10Z M6 25 L11 16 L1 16Z" fill="#9a9a9a"/></svg><svg class="a" style="left:768px;top:1825px;" width="30" height="30" viewBox="0 0 32 32"><circle cx="12" cy="11" r="8.5" fill="#e4e4e4" stroke="#222" stroke-width="1.8"/><circle cx="20" cy="21" r="8.5" fill="#f4f4f4" stroke="#222" stroke-width="1.8"/><circle cx="9.5" cy="8.5" r="3" fill="#fff"/><rect x="12.5" y="12.5" width="7" height="7" fill="#fff" stroke="#1848d8" stroke-width="2.4"/></svg><div class="a w menu" style="left:834px;top:1821px;width:41px;height:39px;border-radius:8px 0 0 8px;"></div><div class="a w menu" style="left:873px;top:1821px;width:42px;height:39px;border-radius:0;background:linear-gradient(#4d76b8,#6890d2)"></div><div class="a w menu" style="left:913px;top:1821px;width:41px;height:39px;border-radius:0;"></div><div class="a w menu" style="left:952px;top:1821px;width:43px;height:39px;border-radius:0;"></div><svg class="a" style="left:839px;top:1825px;" width="30" height="30" viewBox="0 0 32 32"><g stroke-linecap="round"><path d="M16 19V3" stroke="#111" stroke-width="5.5"/><path d="M16 19L3 28" stroke="#111" stroke-width="5.5"/><path d="M16 19L29 27" stroke="#111" stroke-width="5.5"/><path d="M16 19V3" stroke="#3868e8" stroke-width="3"/><path d="M16 19L3 28" stroke="#e83828" stroke-width="3"/><path d="M16 19L29 27" stroke="#38c828" stroke-width="3"/></g><circle cx="16" cy="19" r="2.4" fill="#fff"/></svg><svg class="a" style="left:879px;top:1825px;" width="30" height="30" viewBox="0 0 32 32"><path d="M5 27L22 10" stroke="#0c1c4a" stroke-width="6.5" stroke-linecap="round"/><path d="M14 5H28V19L23.5 14.5L19 10Z" fill="#a8c4f4" stroke="#0c1c4a" stroke-width="2.2" stroke-linejoin="round"/><path d="M5 27L22 10" stroke="#a8c4f4" stroke-width="3" stroke-linecap="round"/></svg><svg class="a" style="left:919px;top:1826px;opacity:0.8;" width="28" height="28" viewBox="0 0 32 32"><path d="M7 28C7 14 14 6 28 6" stroke="#1a2a4a" stroke-width="7" fill="none"/><path d="M7 28C7 14 14 6 28 6" stroke="#5878a8" stroke-width="4" fill="none"/></svg><svg class="a" style="left:959px;top:1826px;opacity:0.8;" width="28" height="28" viewBox="0 0 32 32"><path d="M4 28L18 13" stroke="#1a2a4a" stroke-width="6" stroke-linecap="round"/><path d="M4 28L18 13" stroke="#5068a0" stroke-width="3" stroke-linecap="round"/><rect x="16" y="3" width="12" height="12" rx="2" fill="#6878b0" stroke="#1a2a4a" stroke-width="2"/></svg><div class="a w menu" style="left:993px;top:1821px;width:149px;height:39px;border-radius:0 8px 8px 0;"></div><div class="a t " style="left:1010px;top:1832px;color:#fff;">Local</div><svg class="a" style="left:1122px;top:1828px" width="12" height="26" viewBox="0 0 12 26"><path d="M6 1 L11 10 L1 10Z M6 25 L11 16 L1 16Z" fill="#9a9a9a"/></svg><div class="a w menu" style="left:1153px;top:1821px;width:63px;height:39px;border-radius:8px;"></div><svg class="a" style="left:1196px;top:1828px" width="12" height="26" viewBox="0 0 12 26"><path d="M6 1 L11 10 L1 10Z M6 25 L11 16 L1 16Z" fill="#9a9a9a"/></svg><svg class="a" style="left:1161px;top:1826px;" width="28" height="28" viewBox="0 0 32 32"><circle cx="16" cy="16" r="11" fill="#777" stroke="#5a5a5a" stroke-width="2.5"/><circle cx="16" cy="16" r="5.5" fill="none" stroke="#8a8a8a" stroke-width="2"/></svg><div class="a w reg" style="left:1226px;top:1821px;width:41px;height:39px;border-radius:8px 0 0 8px;"></div><div class="a w menu" style="left:1265px;top:1821px;width:66px;height:39px;border-radius:0;"></div><svg class="a" style="left:1311px;top:1828px" width="12" height="26" viewBox="0 0 12 26"><path d="M6 1 L11 10 L1 10Z M6 25 L11 16 L1 16Z" fill="#9a9a9a"/></svg><div class="a w reg" style="left:1329px;top:1821px;width:40px;height:39px;border-radius:0 8px 8px 0;"></div><div class="a w reg" style="left:1381px;top:1821px;width:41px;height:39px;border-radius:8px 0 0 8px;"></div><div class="a w reg" style="left:1420px;top:1821px;width:39px;height:39px;border-radius:0 8px 8px 0;"></div><svg class="a" style="left:1231px;top:1825px;" width="30" height="30" viewBox="0 0 32 32"><path d="M5 14L16 5A8.5 8.5 0 0 1 27 17L16 27L11 22L21 13A2.5 2.5 0 0 0 18 10L9 19Z" fill="#b8b8b8" stroke="#666" stroke-width="2" stroke-linejoin="round"/><path d="M5 14L9 19M11 22L16 27" stroke="#eee" stroke-width="3"/></svg><svg class="a" style="left:1274px;top:1825px;" width="30" height="30" viewBox="0 0 32 32"><path d="M5 8V24M10 8V24M22 8V24M27 8V24M3 16H29" stroke="#ddd" stroke-width="1.8"/><rect x="13" y="4" width="6" height="24" rx="3" fill="#58a8ff" stroke="#1838a8" stroke-width="1.6"/><rect x="14.8" y="6" width="2.4" height="20" fill="#e0f4ff"/></svg><svg class="a" style="left:1334px;top:1825px;" width="30" height="30" viewBox="0 0 32 32"><path d="M13 18H30M13 25H30M17 12V30M24 4V30M18 11H30" stroke="#222" stroke-width="4"/><path d="M13 18H30M13 25H30M17 12V30M24 4V30M18 11H30" stroke="#f4f4f4" stroke-width="1.8"/><circle cx="10" cy="9" r="7.5" fill="#e8f0ff" stroke="#222" stroke-width="2"/><circle cx="10" cy="9" r="3.5" fill="#3888e8"/></svg><svg class="a" style="left:1386px;top:1825px;" width="30" height="30" viewBox="0 0 32 32"><rect x="3" y="10" width="24" height="18" rx="2.5" fill="#e8e8e8" stroke="#111" stroke-width="2.4"/><rect x="5" y="6" width="7" height="5" fill="#e8e8e8" stroke="#111" stroke-width="1.8"/><rect x="5" y="13" width="4" height="5" fill="#d82848"/><circle cx="17" cy="20" r="6.5" fill="#c8c8c8" stroke="#333" stroke-width="1.6"/><circle cx="17" cy="20" r="3.8" fill="#a01838"/><path d="M25 1L27 6L32 8L27 10L25 15L23 10L18 8L23 6Z" fill="#f8e838" stroke="#a88808" stroke-width="1"/></svg><svg class="a" style="left:1424px;top:1825px;" width="30" height="30" viewBox="0 0 32 32"><rect x="4" y="15" width="24" height="14" fill="#e8e8e8" stroke="#111" stroke-width="2.2"/><path d="M4 21H28" stroke="#111" stroke-width="1.6"/><path d="M7 15L11 21M14 15L18 21M21 15L25 21" stroke="#111" stroke-width="2.6"/><path d="M3 13L27 3L29 8L5 17Z" fill="#e8e8e8" stroke="#111" stroke-width="2"/><path d="M9 10.5L12 14.5M15 8L18 12M21 5.5L24 9.5" stroke="#111" stroke-width="2.6"/><circle cx="5" cy="14" r="2.4" fill="#3868d8"/></svg><div class="a " style="left:0px;top:1870px;width:2602px;height:96px;background:#787878"></div><div class="a " style="left:0px;top:1870px;width:441px;height:96px;background:#454545"></div><div class="a " style="left:2349px;top:1870px;width:253px;height:96px;background:#454545"></div><div class="a " style="left:0px;top:1870px;width:8px;height:96px;background:#6a6a6a"></div><svg class="a" style="left:0px;top:1870px;" width="2602" height="96" viewBox="0 0 2602 96"><rect x="58.5" y="0" width="3" height="96" fill="#3f3f3f"/><rect x="134.8" y="0" width="3" height="96" fill="#3a3a3a"/><rect x="211.1" y="0" width="3" height="96" fill="#3f3f3f"/><rect x="287.4" y="0" width="3" height="96" fill="#3f3f3f"/><rect x="363.7" y="0" width="3" height="96" fill="#3f3f3f"/><rect x="440.0" y="0" width="3" height="96" fill="#666"/><rect x="476.1" y="0" width="7" height="96" fill="#6c6c6c"/><rect x="516.3" y="0" width="3" height="96" fill="#666"/><rect x="552.5" y="0" width="7" height="96" fill="#6c6c6c"/><rect x="592.6" y="0" width="3" height="96" fill="#666"/><rect x="628.8" y="0" width="7" height="96" fill="#6c6c6c"/><rect x="668.9" y="0" width="3" height="96" fill="#666"/><rect x="705.0" y="0" width="7" height="96" fill="#6c6c6c"/><rect x="745.2" y="0" width="3" height="96" fill="#666"/><rect x="781.4" y="0" width="7" height="96" fill="#6c6c6c"/><rect x="821.5" y="0" width="3" height="96" fill="#666"/><rect x="857.6" y="0" width="7" height="96" fill="#6c6c6c"/><rect x="897.8" y="0" width="3" height="96" fill="#666"/><rect x="934.0" y="0" width="7" height="96" fill="#6c6c6c"/><rect x="974.1" y="0" width="3" height="96" fill="#666"/><rect x="1010.2" y="0" width="7" height="96" fill="#6c6c6c"/><rect x="1050.4" y="0" width="3" height="96" fill="#666"/><rect x="1086.5" y="0" width="7" height="96" fill="#6c6c6c"/><rect x="1126.7" y="0" width="3" height="96" fill="#666"/><rect x="1162.8" y="0" width="7" height="96" fill="#6c6c6c"/><rect x="1203.0" y="0" width="3" height="96" fill="#666"/><rect x="1239.2" y="0" width="7" height="96" fill="#6c6c6c"/><rect x="1279.3" y="0" width="3" height="96" fill="#666"/><rect x="1315.4" y="0" width="7" height="96" fill="#6c6c6c"/><rect x="1355.6" y="0" width="3" height="96" fill="#666"/><rect x="1391.8" y="0" width="7" height="96" fill="#6c6c6c"/><rect x="1431.9" y="0" width="3" height="96" fill="#666"/><rect x="1468.0" y="0" width="7" height="96" fill="#6c6c6c"/><rect x="1508.2" y="0" width="3" height="96" fill="#666"/><rect x="1544.3" y="0" width="7" height="96" fill="#6c6c6c"/><rect x="1584.5" y="0" width="3" height="96" fill="#666"/><rect x="1620.7" y="0" width="7" height="96" fill="#6c6c6c"/><rect x="1660.8" y="0" width="3" height="96" fill="#666"/><rect x="1697.0" y="0" width="7" height="96" fill="#6c6c6c"/><rect x="1737.1" y="0" width="3" height="96" fill="#666"/><rect x="1773.2" y="0" width="7" height="96" fill="#6c6c6c"/><rect x="1813.4" y="0" width="3" height="96" fill="#666"/><rect x="1849.5" y="0" width="7" height="96" fill="#6c6c6c"/><rect x="1889.7" y="0" width="3" height="96" fill="#666"/><rect x="1925.8" y="0" width="7" height="96" fill="#6c6c6c"/><rect x="1966.0" y="0" width="3" height="96" fill="#666"/><rect x="2002.2" y="0" width="7" height="96" fill="#6c6c6c"/><rect x="2042.3" y="0" width="3" height="96" fill="#666"/><rect x="2078.4" y="0" width="7" height="96" fill="#6c6c6c"/><rect x="2118.6" y="0" width="3" height="96" fill="#666"/><rect x="2154.8" y="0" width="7" height="96" fill="#6c6c6c"/><rect x="2194.9" y="0" width="3" height="96" fill="#666"/><rect x="2231.1" y="0" width="7" height="96" fill="#6c6c6c"/><rect x="2271.2" y="0" width="3" height="96" fill="#666"/><rect x="2307.3" y="0" width="7" height="96" fill="#6c6c6c"/><rect x="2347.5" y="0" width="3" height="96" fill="#666"/><rect x="2423.8" y="0" width="3" height="96" fill="#3f3f3f"/><rect x="2500.1" y="0" width="3" height="96" fill="#3f3f3f"/><rect x="2576.4" y="0" width="3" height="96" fill="#3f3f3f"/></svg><div class="a " style="left:441px;top:1870px;width:3px;height:96px;background:#4a2a2a"></div><div class="a " style="left:446px;top:1870px;width:8px;height:96px;background:#60c040"></div><div class="a " style="left:0px;top:1966px;width:2602px;height:34px;background:#727272"></div><div class="a " style="left:9px;top:1967px;width:2593px;height:25px;background:linear-gradient(#8e8e8e,#9c9c9c);border-radius:12px;border:2px solid #5a5a5a;box-sizing:border-box"></div><div class="a " style="left:12px;top:1970px;width:14px;height:19px;background:#6a6a6a;border-radius:7px"></div><div class="a t " style="left:-327px;width:800px;text-align:center;top:1967px;">-50</div><div class="a t " style="left:-251px;width:800px;text-align:center;top:1967px;">-40</div><div class="a t " style="left:-175px;width:800px;text-align:center;top:1967px;">-30</div><div class="a t " style="left:-99px;width:800px;text-align:center;top:1967px;">-20</div><div class="a t " style="left:-23px;width:800px;text-align:center;top:1967px;">-10</div><div class="a t " style="left:50px;width:800px;text-align:center;top:1967px;">0</div><div class="a t " style="left:129px;width:800px;text-align:center;top:1967px;">10</div><div class="a t " style="left:205px;width:800px;text-align:center;top:1967px;">20</div><div class="a t " style="left:281px;width:800px;text-align:center;top:1967px;">30</div><div class="a t " style="left:357px;width:800px;text-align:center;top:1967px;">40</div><div class="a t " style="left:433px;width:800px;text-align:center;top:1967px;">50</div><div class="a t " style="left:509px;width:800px;text-align:center;top:1967px;">60</div><div class="a t " style="left:585px;width:800px;text-align:center;top:1967px;">70</div><div class="a t " style="left:661px;width:800px;text-align:center;top:1967px;">80</div><div class="a t " style="left:737px;width:800px;text-align:center;top:1967px;">90</div><div class="a t " style="left:813px;width:800px;text-align:center;top:1967px;">100</div><div class="a t " style="left:889px;width:800px;text-align:center;top:1967px;">110</div><div class="a t " style="left:965px;width:800px;text-align:center;top:1967px;">120</div><div class="a t " style="left:1041px;width:800px;text-align:center;top:1967px;">130</div><div class="a t " style="left:1117px;width:800px;text-align:center;top:1967px;">140</div><div class="a t " style="left:1193px;width:800px;text-align:center;top:1967px;">150</div><div class="a t " style="left:1269px;width:800px;text-align:center;top:1967px;">160</div><div class="a t " style="left:1345px;width:800px;text-align:center;top:1967px;">170</div><div class="a t " style="left:1421px;width:800px;text-align:center;top:1967px;">180</div><div class="a t " style="left:1497px;width:800px;text-align:center;top:1967px;">190</div><div class="a t " style="left:1573px;width:800px;text-align:center;top:1967px;">200</div><div class="a t " style="left:1649px;width:800px;text-align:center;top:1967px;">210</div><div class="a t " style="left:1725px;width:800px;text-align:center;top:1967px;">220</div><div class="a t " style="left:1801px;width:800px;text-align:center;top:1967px;">230</div><div class="a t " style="left:1877px;width:800px;text-align:center;top:1967px;">240</div><div class="a t " style="left:1953px;width:800px;text-align:center;top:1967px;">250</div><div class="a t " style="left:2029px;width:800px;text-align:center;top:1967px;">260</div><div class="a t " style="left:2105px;width:800px;text-align:center;top:1967px;">270</div><div class="a t " style="left:2181px;width:800px;text-align:center;top:1967px;">280</div><div class="a " style="left:0px;top:1998px;width:2602px;height:55px;background:#727272"></div><div class="a " style="left:0px;top:1998px;width:2602px;height:2px;background:#686868"></div><div class="a w menu" style="left:17px;top:2008px;width:64px;height:38px;border-radius:8px;"></div><svg class="a" style="left:61px;top:2014px" width="12" height="26" viewBox="0 0 12 26"><path d="M6 1 L11 10 L1 10Z M6 25 L11 16 L1 16Z" fill="#9a9a9a"/></svg><svg class="a" style="left:25px;top:2012px;" width="30" height="30" viewBox="0 0 32 32"><circle cx="16" cy="16" r="12.5" fill="#f4f4f4" stroke="#111" stroke-width="2.2"/><circle cx="16" cy="16" r="9.5" fill="none" stroke="#bbb" stroke-width="1.5"/><path d="M16 16L21 8" stroke="#222" stroke-width="2"/><path d="M16 16L12 21" stroke="#d02020" stroke-width="2.6"/><circle cx="16" cy="16" r="1.8" fill="#222"/></svg><div class="a t " style="left:105px;top:2017px;">View</div><div class="a t " style="left:197px;top:2017px;">Marker</div><div class="a t " style="left:311px;top:2017px;">Frame</div><div class="a t " style="left:417px;top:2017px;">Playback</div><div class="a w reg" style="left:538px;top:2008px;width:41px;height:38px;border-radius:8px 0 0 8px;"></div><div class="a w reg" style="left:577px;top:2008px;width:41px;height:38px;border-radius:0 8px 8px 0;"></div><svg class="a" style="left:543px;top:2012px;" width="30" height="30" viewBox="0 0 32 32"><circle cx="16" cy="16" r="12.5" fill="#f8f8f8" stroke="#111" stroke-width="2.2"/><path d="M16 16V4A12 12 0 0 1 28 16Z" fill="#f8a818"/><path d="M16 16L10 21" stroke="#d02020" stroke-width="2.6"/><path d="M16 16V7" stroke="#222" stroke-width="1.6"/></svg><svg class="a" style="left:582px;top:2012px;" width="30" height="30" viewBox="0 0 32 32"><path d="M9 15V10A7 7 0 0 1 23 10V15" stroke="#111" stroke-width="5.5" fill="none"/><path d="M9 15V10A7 7 0 0 1 23 10V15" stroke="#ddd" stroke-width="2.6" fill="none"/><rect x="5" y="14" width="22" height="15" rx="2" fill="#e4e4e4" stroke="#111" stroke-width="2.2"/><path d="M7 19H25M7 24H25" stroke="#aaa" stroke-width="1.5"/><rect x="14.5" y="18" width="3" height="6" fill="#333"/></svg><div class="a w num" style="left:628px;top:2008px;width:238px;height:38px;border-radius:19px 0 0 19px;"></div><div class="a t " style="left:660px;top:2016px;">Start:</div><div class="a t " style="left:-166px;width:1000px;text-align:right;top:2016px;">1</div><svg class="a" style="left:638px;top:2020px;" width="10" height="14" viewBox="0 0 10 14"><path d="M9 0L1 7L9 14Z" fill="#8a8a8a"/></svg><svg class="a" style="left:846px;top:2020px;" width="10" height="14" viewBox="0 0 10 14"><path d="M1 0L9 7L1 14Z" fill="#8a8a8a"/></svg><div class="a w num" style="left:864px;top:2008px;width:227px;height:38px;border-radius:0 19px 19px 0;"></div><div class="a t " style="left:896px;top:2016px;">End:</div><div class="a t " style="left:59px;width:1000px;text-align:right;top:2016px;">250</div><svg class="a" style="left:874px;top:2020px;" width="10" height="14" viewBox="0 0 10 14"><path d="M9 0L1 7L9 14Z" fill="#8a8a8a"/></svg><svg class="a" style="left:1071px;top:2020px;" width="10" height="14" viewBox="0 0 10 14"><path d="M1 0L9 7L1 14Z" fill="#8a8a8a"/></svg><div class="a w num" style="left:1103px;top:2008px;width:177px;height:38px;border-radius:19px;"></div><div class="a t " style="left:1135px;top:2016px;"></div><div class="a t " style="left:248px;width:1000px;text-align:right;top:2016px;">1</div><svg class="a" style="left:1113px;top:2020px;" width="10" height="14" viewBox="0 0 10 14"><path d="M9 0L1 7L9 14Z" fill="#8a8a8a"/></svg><svg class="a" style="left:1260px;top:2020px;" width="10" height="14" viewBox="0 0 10 14"><path d="M1 0L9 7L1 14Z" fill="#8a8a8a"/></svg><div class="a w reg" style="left:1314px;top:2008px;width:42px;height:38px;border-radius:8px 0 0 8px;"></div><svg class="a" style="left:1319px;top:2012px;" width="30" height="30" viewBox="0 0 32 32"><path d="M4 5V27" stroke="#111" stroke-width="5"/><path d="M4 5V27" stroke="#f8f8f8" stroke-width="2"/><path d="M17 5V27L6 16Z M29 5V27L18 16Z" fill="#f8f8f8" stroke="#111" stroke-width="2" stroke-linejoin="round"/></svg><div class="a w reg" style="left:1354px;top:2008px;width:42px;height:38px;border-radius:0;"></div><svg class="a" style="left:1359px;top:2012px;" width="30" height="30" viewBox="0 0 32 32"><path d="M16 5V27L4 16Z M29 5V27L17 16Z" fill="#f8f8f8" stroke="#111" stroke-width="2" stroke-linejoin="round"/></svg><div class="a w reg" style="left:1394px;top:2008px;width:42px;height:38px;border-radius:0;"></div><svg class="a" style="left:1399px;top:2012px;" width="30" height="30" viewBox="0 0 32 32"><path d="M25 3V29L5 16Z" fill="#f8f8f8" stroke="#111" stroke-width="2" stroke-linejoin="round"/></svg><div class="a w reg" style="left:1434px;top:2008px;width:42px;height:38px;border-radius:0;"></div><svg class="a" style="left:1439px;top:2012px;" width="30" height="30" viewBox="0 0 32 32"><path d="M7 3V29L27 16Z" fill="#f8f8f8" stroke="#111" stroke-width="2" stroke-linejoin="round"/></svg><div class="a w reg" style="left:1474px;top:2008px;width:42px;height:38px;border-radius:0;"></div><svg class="a" style="left:1479px;top:2012px;" width="30" height="30" viewBox="0 0 32 32"><path d="M3 5V27L15 16Z M16 5V27L28 16Z" fill="#f8f8f8" stroke="#111" stroke-width="2" stroke-linejoin="round"/></svg><div class="a w reg" style="left:1514px;top:2008px;width:40px;height:38px;border-radius:0 8px 8px 0;"></div><svg class="a" style="left:1519px;top:2012px;" width="30" height="30" viewBox="0 0 32 32"><path d="M28 5V27" stroke="#111" stroke-width="5"/><path d="M28 5V27" stroke="#f8f8f8" stroke-width="2"/><path d="M3 5V27L14 16Z M15 5V27L26 16Z" fill="#f8f8f8" stroke="#111" stroke-width="2" stroke-linejoin="round"/></svg><div class="a w menu" style="left:1565px;top:2008px;width:238px;height:38px;border-radius:8px;"></div><div class="a t " style="left:1581px;top:2017px;color:#fff;">No Sync</div><svg class="a" style="left:1783px;top:2014px" width="12" height="26" viewBox="0 0 12 26"><path d="M6 1 L11 10 L1 10Z M6 25 L11 16 L1 16Z" fill="#9a9a9a"/></svg><div class="a w reg" style="left:1837px;top:2008px;width:39px;height:38px;border-radius:8px;"></div><div class="a " style="left:1847px;top:2017px;width:20px;height:20px;border-radius:10px;background:#e04020;border:2px solid #7a1a0a;box-sizing:border-box"></div><div class="a w menu" style="left:1888px;top:2008px;width:62px;height:38px;border-radius:8px;"></div><svg class="a" style="left:1930px;top:2014px" width="12" height="26" viewBox="0 0 12 26"><path d="M6 1 L11 10 L1 10Z M6 25 L11 16 L1 16Z" fill="#9a9a9a"/></svg><svg class="a" style="left:1898px;top:2017px;" width="20" height="20" viewBox="0 0 20 20"><path d="M10 1L19 10L10 19L1 10Z" fill="#f4b400" stroke="#5a3a00" stroke-width="1.5"/></svg><div class="a w txt" style="left:1961px;top:2008px;width:273px;height:38px;border-radius:8px 0 0 8px;"></div><div class="a w reg" style="left:2232px;top:2008px;width:41px;height:38px;border-radius:0;"></div><div class="a w reg" style="left:2271px;top:2008px;width:40px;height:38px;border-radius:0 8px 8px 0;"></div><svg class="a" style="left:1967px;top:2011px;" width="32" height="32" viewBox="0 0 32 32"><path d="M9 3V22" stroke="#111" stroke-width="6"/><path d="M9 3V22M9 6H14M9 11H13" stroke="#e8e098" stroke-width="3"/><circle cx="9" cy="25" r="4.5" fill="none" stroke="#111" stroke-width="5"/><circle cx="9" cy="25" r="4.5" fill="none" stroke="#e8e098" stroke-width="2.4"/><path d="M15 24L27 12" stroke="#111" stroke-width="5.5" stroke-linecap="round"/><path d="M15 24L27 12" stroke="#f4f4f4" stroke-width="2.6" stroke-linecap="round"/></svg><svg class="a" style="left:2238px;top:2013px;" width="28" height="28" viewBox="0 0 32 32"><circle cx="9" cy="23" r="5" fill="none" stroke="#111" stroke-width="5.5"/><path d="M13 19L27 5M22 10L26 14" stroke="#111" stroke-width="5.5" stroke-linecap="round"/><circle cx="9" cy="23" r="5" fill="none" stroke="#f4f4f4" stroke-width="2.6"/><path d="M13 19L27 5M22 10L26 14" stroke="#f4f4f4" stroke-width="2.6" stroke-linecap="round"/></svg><svg class="a" style="left:2277px;top:2013px;" width="28" height="28" viewBox="0 0 32 32"><circle cx="9" cy="23" r="5" fill="none" stroke="#111" stroke-width="5.5"/><path d="M13 19L27 5M22 10L26 14" stroke="#111" stroke-width="5.5" stroke-linecap="round"/><circle cx="9" cy="23" r="5" fill="none" stroke="#f4f4f4" stroke-width="2.6"/><path d="M13 19L27 5M22 10L26 14" stroke="#f4f4f4" stroke-width="2.6" stroke-linecap="round"/><path d="M5 5L27 27" stroke="#e82838" stroke-width="3.2" stroke-linecap="round"/></svg><div class="a " style="left:2602px;top:96px;width:4px;height:1957px;background:#0e0e0e"></div><div class="a " style="left:2606px;top:98px;width:676px;height:49px;background:#727272"></div><div class="a " style="left:2606px;top:98px;width:676px;height:2px;background:#808080"></div><div class="a w menu" style="left:2624px;top:104px;width:63px;height:39px;border-radius:8px;"></div><svg class="a" style="left:2667px;top:111px" width="12" height="26" viewBox="0 0 12 26"><path d="M6 1 L11 10 L1 10Z M6 25 L11 16 L1 16Z" fill="#9a9a9a"/></svg><svg class="a" style="left:2630px;top:107px;" width="32" height="32" viewBox="0 0 32 32"><rect x="4" y="3" width="10" height="6" fill="#f0a030" stroke="#222" stroke-width="1.2"/><path d="M7 9V26H14M7 17H14" stroke="#eee" stroke-width="2" fill="none"/><rect x="14" y="14" width="12" height="5" fill="#eee" stroke="#222" stroke-width="1"/><rect x="14" y="23" width="12" height="5" fill="#eee" stroke="#222" stroke-width="1"/><path d="M16 16.5H24M16 25.5H24" stroke="#333" stroke-width="1.5"/></svg><div class="a t " style="left:2712px;top:115px;">View</div><div class="a t " style="left:2802px;top:115px;">Search</div><div class="a w menu" style="left:2902px;top:104px;width:252px;height:39px;border-radius:8px;"></div><div class="a t " style="left:2918px;top:115px;color:#fff;">All Scenes</div><svg class="a" style="left:3134px;top:111px" width="12" height="26" viewBox="0 0 12 26"><path d="M6 1 L11 10 L1 10Z M6 25 L11 16 L1 16Z" fill="#9a9a9a"/></svg><div class="a w txt" style="left:3165px;top:104px;width:140px;height:39px;border-radius:8px 0 0 8px;border-radius:19px 0 0 19px"></div><svg class="a" style="left:3179px;top:106px;" width="32" height="32" viewBox="0 0 32 32"><path d="M4 28L13 18" stroke="#3a2008" stroke-width="7" stroke-linecap="round"/><path d="M4 28L13 18" stroke="#e08828" stroke-width="4" stroke-linecap="round"/><circle cx="20" cy="11" r="9" fill="#f0f0f0" stroke="#222" stroke-width="2.4"/><circle cx="20" cy="11" r="5.5" fill="#d8c0c8" opacity=".8"/><circle cx="18" cy="9" r="2.2" fill="#fff"/></svg><div class="a" style="left:2606px;top:147px;width:676px;height:938px;overflow:hidden;background:#797979"><div class="a " style="left:0px;top:-21px;width:676px;height:40px;background:rgba(255,255,255,.025)"></div><div class="a " style="left:0px;top:59px;width:676px;height:40px;background:rgba(255,255,255,.025)"></div><div class="a " style="left:0px;top:139px;width:676px;height:40px;background:rgba(255,255,255,.025)"></div><div class="a " style="left:0px;top:219px;width:676px;height:40px;background:rgba(255,255,255,.025)"></div><div class="a " style="left:0px;top:299px;width:676px;height:40px;background:rgba(255,255,255,.025)"></div><div class="a " style="left:0px;top:379px;width:676px;height:40px;background:rgba(255,255,255,.025)"></div><div class="a " style="left:0px;top:459px;width:676px;height:40px;background:rgba(255,255,255,.025)"></div><div class="a " style="left:0px;top:539px;width:676px;height:40px;background:rgba(255,255,255,.025)"></div><div class="a " style="left:0px;top:619px;width:676px;height:40px;background:rgba(255,255,255,.025)"></div><div class="a " style="left:0px;top:699px;width:676px;height:40px;background:rgba(255,255,255,.025)"></div><div class="a " style="left:0px;top:779px;width:676px;height:40px;background:rgba(255,255,255,.025)"></div><div class="a " style="left:0px;top:859px;width:676px;height:40px;background:rgba(255,255,255,.025)"></div><div class="a " style="left:0px;top:259px;width:524px;height:40px;background:#888"></div><div class="a " style="left:60px;top:0px;width:2px;height:900px;background:#5e5e5e"></div><div class="a " style="left:100px;top:259px;width:2px;height:600px;background:#5e5e5e"></div><div class="a " style="left:522px;top:0px;width:7px;height:938px;background:rgba(255,255,255,.055)"></div><div class="a " style="left:562px;top:0px;width:7px;height:938px;background:rgba(255,255,255,.055)"></div><div class="a " style="left:602px;top:0px;width:7px;height:938px;background:rgba(255,255,255,.055)"></div><div class="a " style="left:99px;top:-2px;width:28px;height:2px;background:#5e5e5e"></div><svg class="a" style="left:88px;top:-12px;" width="22" height="22" viewBox="0 0 24 24"><circle cx="12" cy="12" r="8.3" fill="#ececec" stroke="#111" stroke-width="2.4"/><path d="M7 12H17M12 7V17" stroke="#111" stroke-width="2.8"/></svg><svg class="a" style="left:125px;top:-16px;" width="30" height="30" viewBox="0 0 32 32"><path d="M5 6H27L16 28Z" stroke="#2a160a" stroke-width="7" stroke-linejoin="round" fill="none"/><path d="M5 6H27L16 28Z" stroke="#f09030" stroke-width="4" stroke-linejoin="round" fill="none"/><path d="M6 5.5H26" stroke="#ffd9a0" stroke-width="1.5"/></svg><div class="a t " style="left:166px;top:-12px;">Cur_00_0</div><div class="a " style="left:285.6171875px;top:-16px;width:3px;height:30px;background:#5f5f5f"></div><svg class="a" style="left:310.617px;top:-16px;opacity:0.5;" width="30" height="30" viewBox="0 0 32 32"><rect x="12" y="14" width="7" height="7" fill="#ddd" stroke="#222" stroke-width="2"/></svg><svg class="a" style="left:529px;top:-15px;" width="28" height="28" viewBox="0 0 32 32"><path d="M3 16C8 8 24 8 29 16C24 24 8 24 3 16Z" fill="#f4f4f4" stroke="#111" stroke-width="2.4"/><circle cx="16" cy="15" r="4.2" fill="#111"/><path d="M9 19C13 22 19 22 23 19" stroke="#999" stroke-width="1.5" fill="none"/></svg><svg class="a" style="left:570px;top:-15px;" width="28" height="28" viewBox="0 0 32 32"><path d="M9 3L9 24L14 19.5L18.5 29L22.5 27L18 18L25 18Z" fill="#f6f6f6" stroke="#0c0c0c" stroke-width="2.6" stroke-linejoin="round"/></svg><svg class="a" style="left:608px;top:-16px;" width="28" height="28" viewBox="0 0 32 32"><rect x="3" y="8" width="27" height="20" rx="2.5" fill="#f2f2f2" stroke="#0c0c0c" stroke-width="2.6"/><rect x="5" y="4" width="7" height="6" rx="2" fill="#f2f2f2" stroke="#0c0c0c" stroke-width="2"/><rect x="6" y="12" width="5" height="13" fill="#333"/><rect x="6" y="10" width="5" height="5" fill="#d02050"/><circle cx="19" cy="19" r="7" fill="#c8c8c8" stroke="#555" stroke-width="1.5"/><circle cx="19" cy="19" r="4.3" fill="#c01848"/><path d="M17 17A3 3 0 0 1 21 17" stroke="#501020" stroke-width="2" fill="none"/><rect x="24" y="10.5" width="4" height="3" fill="#111"/></svg><div class="a " style="left:62px;top:38px;width:24px;height:2px;background:#5e5e5e"></div><svg class="a" style="left:85px;top:24px;" width="30" height="30" viewBox="0 0 32 32"><path d="M16 4V18L5 25M16 18L27 24" stroke="#2a160a" stroke-width="6.5" stroke-linecap="round" fill="none"/><path d="M16 4V18L5 25M16 18L27 24" stroke="#f08c2c" stroke-width="3.4" stroke-linecap="round" fill="none"/><path d="M16 4V8M5 25L7 23.7M27 24L25 22.8" stroke="#ffe9c8" stroke-width="3" stroke-linecap="round"/></svg><div class="a t " style="left:126px;top:28px;">Empty</div><svg class="a" style="left:529px;top:25px;" width="28" height="28" viewBox="0 0 32 32"><path d="M3 16C8 8 24 8 29 16C24 24 8 24 3 16Z" fill="#f4f4f4" stroke="#111" stroke-width="2.4"/><circle cx="16" cy="15" r="4.2" fill="#111"/><path d="M9 19C13 22 19 22 23 19" stroke="#999" stroke-width="1.5" fill="none"/></svg><svg class="a" style="left:570px;top:25px;" width="28" height="28" viewBox="0 0 32 32"><path d="M9 3L9 24L14 19.5L18.5 29L22.5 27L18 18L25 18Z" fill="#f6f6f6" stroke="#0c0c0c" stroke-width="2.6" stroke-linejoin="round"/></svg><svg class="a" style="left:608px;top:24px;" width="28" height="28" viewBox="0 0 32 32"><rect x="3" y="8" width="27" height="20" rx="2.5" fill="#f2f2f2" stroke="#0c0c0c" stroke-width="2.6"/><rect x="5" y="4" width="7" height="6" rx="2" fill="#f2f2f2" stroke="#0c0c0c" stroke-width="2"/><rect x="6" y="12" width="5" height="13" fill="#333"/><rect x="6" y="10" width="5" height="5" fill="#d02050"/><circle cx="19" cy="19" r="7" fill="#c8c8c8" stroke="#555" stroke-width="1.5"/><circle cx="19" cy="19" r="4.3" fill="#c01848"/><path d="M17 17A3 3 0 0 1 21 17" stroke="#501020" stroke-width="2" fill="none"/><rect x="24" y="10.5" width="4" height="3" fill="#111"/></svg><div class="a " style="left:59px;top:78px;width:28px;height:2px;background:#5e5e5e"></div><svg class="a" style="left:48px;top:68px;" width="22" height="22" viewBox="0 0 24 24"><circle cx="12" cy="12" r="8.3" fill="#ececec" stroke="#111" stroke-width="2.4"/><path d="M7 12H17M12 7V17" stroke="#111" stroke-width="2.8"/></svg><svg class="a" style="left:85px;top:64px;" width="30" height="30" viewBox="0 0 32 32"><path d="M16 4V18L5 25M16 18L27 24" stroke="#2a160a" stroke-width="6.5" stroke-linecap="round" fill="none"/><path d="M16 4V18L5 25M16 18L27 24" stroke="#f08c2c" stroke-width="3.4" stroke-linecap="round" fill="none"/><path d="M16 4V8M5 25L7 23.7M27 24L25 22.8" stroke="#ffe9c8" stroke-width="3" stroke-linecap="round"/></svg><div class="a t " style="left:126px;top:68px;">Floor_5</div><div class="a " style="left:223.828125px;top:64px;width:3px;height:30px;background:#5f5f5f"></div><svg class="a" style="left:248.828px;top:64px;opacity:0.42;" width="30" height="30" viewBox="0 0 32 32"><path d="M5 6H27L16 28Z" stroke="#2a160a" stroke-width="7" stroke-linejoin="round" fill="none"/><path d="M5 6H27L16 28Z" stroke="#f09030" stroke-width="4" stroke-linejoin="round" fill="none"/><path d="M6 5.5H26" stroke="#ffd9a0" stroke-width="1.5"/></svg><svg class="a" style="left:529px;top:65px;" width="28" height="28" viewBox="0 0 32 32"><path d="M3 16C8 8 24 8 29 16C24 24 8 24 3 16Z" fill="#f4f4f4" stroke="#111" stroke-width="2.4"/><circle cx="16" cy="15" r="4.2" fill="#111"/><path d="M9 19C13 22 19 22 23 19" stroke="#999" stroke-width="1.5" fill="none"/></svg><svg class="a" style="left:570px;top:65px;" width="28" height="28" viewBox="0 0 32 32"><path d="M9 3L9 24L14 19.5L18.5 29L22.5 27L18 18L25 18Z" fill="#f6f6f6" stroke="#0c0c0c" stroke-width="2.6" stroke-linejoin="round"/></svg><svg class="a" style="left:608px;top:64px;" width="28" height="28" viewBox="0 0 32 32"><rect x="3" y="8" width="27" height="20" rx="2.5" fill="#f2f2f2" stroke="#0c0c0c" stroke-width="2.6"/><rect x="5" y="4" width="7" height="6" rx="2" fill="#f2f2f2" stroke="#0c0c0c" stroke-width="2"/><rect x="6" y="12" width="5" height="13" fill="#333"/><rect x="6" y="10" width="5" height="5" fill="#d02050"/><circle cx="19" cy="19" r="7" fill="#c8c8c8" stroke="#555" stroke-width="1.5"/><circle cx="19" cy="19" r="4.3" fill="#c01848"/><path d="M17 17A3 3 0 0 1 21 17" stroke="#501020" stroke-width="2" fill="none"/><rect x="24" y="10.5" width="4" height="3" fill="#111"/></svg><div class="a " style="left:59px;top:118px;width:28px;height:2px;background:#5e5e5e"></div><svg class="a" style="left:48px;top:108px;" width="22" height="22" viewBox="0 0 24 24"><circle cx="12" cy="12" r="8.3" fill="#ececec" stroke="#111" stroke-width="2.4"/><path d="M7 12H17M12 7V17" stroke="#111" stroke-width="2.8"/></svg><svg class="a" style="left:85px;top:104px;" width="30" height="30" viewBox="0 0 32 32"><circle cx="16" cy="11.5" r="9" fill="#e9a858" stroke="#2a160a" stroke-width="2"/><circle cx="13" cy="8.5" r="4.5" fill="#fbe3bd" opacity=".85"/><path d="M12 14L14 20M20 14L18 20" stroke="#8a4a14" stroke-width="1.5"/><rect x="11" y="20" width="10" height="9" rx="2" fill="#f3ead8" stroke="#2a160a" stroke-width="2"/><path d="M11 23H21M11 26H21" stroke="#8a5a30" stroke-width="1.6"/></svg><div class="a t " style="left:126px;top:108px;">Lamp</div><div class="a " style="left:205.91093749999982px;top:104px;width:3px;height:30px;background:#5f5f5f"></div><svg class="a" style="left:230.911px;top:104px;opacity:0.5;" width="30" height="30" viewBox="0 0 32 32"><circle cx="16" cy="16" r="7" fill="#b8bc8c" stroke="#6a6e48" stroke-width="2"/><circle cx="16" cy="16" r="3" fill="#e4e6c8"/><g fill="#a8ac80"><rect x="3" y="3" width="6" height="5"/><rect x="23" y="3" width="6" height="5"/><rect x="3" y="24" width="6" height="5"/><rect x="23" y="24" width="6" height="5"/></g></svg><svg class="a" style="left:529px;top:105px;" width="28" height="28" viewBox="0 0 32 32"><path d="M3 16C8 8 24 8 29 16C24 24 8 24 3 16Z" fill="#f4f4f4" stroke="#111" stroke-width="2.4"/><circle cx="16" cy="15" r="4.2" fill="#111"/><path d="M9 19C13 22 19 22 23 19" stroke="#999" stroke-width="1.5" fill="none"/></svg><svg class="a" style="left:570px;top:105px;" width="28" height="28" viewBox="0 0 32 32"><path d="M9 3L9 24L14 19.5L18.5 29L22.5 27L18 18L25 18Z" fill="#f6f6f6" stroke="#0c0c0c" stroke-width="2.6" stroke-linejoin="round"/></svg><svg class="a" style="left:608px;top:104px;" width="28" height="28" viewBox="0 0 32 32"><rect x="3" y="8" width="27" height="20" rx="2.5" fill="#f2f2f2" stroke="#0c0c0c" stroke-width="2.6"/><rect x="5" y="4" width="7" height="6" rx="2" fill="#f2f2f2" stroke="#0c0c0c" stroke-width="2"/><rect x="6" y="12" width="5" height="13" fill="#333"/><rect x="6" y="10" width="5" height="5" fill="#d02050"/><circle cx="19" cy="19" r="7" fill="#c8c8c8" stroke="#555" stroke-width="1.5"/><circle cx="19" cy="19" r="4.3" fill="#c01848"/><path d="M17 17A3 3 0 0 1 21 17" stroke="#501020" stroke-width="2" fill="none"/><rect x="24" y="10.5" width="4" height="3" fill="#111"/></svg><div class="a " style="left:59px;top:158px;width:28px;height:2px;background:#5e5e5e"></div><svg class="a" style="left:48px;top:148px;" width="22" height="22" viewBox="0 0 24 24"><circle cx="12" cy="12" r="8.3" fill="#ececec" stroke="#111" stroke-width="2.4"/><path d="M7 12H17M12 7V17" stroke="#111" stroke-width="2.8"/></svg><svg class="a" style="left:85px;top:144px;" width="30" height="30" viewBox="0 0 32 32"><path d="M11 5C22 3 28 11 25 18C22 25 13 26 6 28" stroke="#2a160a" stroke-width="7" stroke-linecap="round" fill="none"/><path d="M11 5C22 3 28 11 25 18C22 25 13 26 6 28" stroke="#f0a030" stroke-width="3.8" stroke-linecap="round" fill="none"/><path d="M12 5.2C21 4 26 11 23.6 17" stroke="#ffe08a" stroke-width="1.4" fill="none"/></svg><div class="a t " style="left:126px;top:148px;">NurbsPath</div><div class="a " style="left:256.0859375px;top:144px;width:3px;height:30px;background:#5f5f5f"></div><svg class="a" style="left:281.086px;top:144px;opacity:0.5;" width="30" height="30" viewBox="0 0 32 32"><path d="M14 5C26 6 27 20 9 26" stroke="#1c1c1c" stroke-width="2.4" fill="none"/><g fill="#f4f4f4" stroke="#1c1c1c" stroke-width="1.8"><circle cx="14" cy="5" r="3"/><circle cx="8" cy="26" r="3"/></g></svg><svg class="a" style="left:529px;top:145px;" width="28" height="28" viewBox="0 0 32 32"><path d="M3 16C8 8 24 8 29 16C24 24 8 24 3 16Z" fill="#f4f4f4" stroke="#111" stroke-width="2.4"/><circle cx="16" cy="15" r="4.2" fill="#111"/><path d="M9 19C13 22 19 22 23 19" stroke="#999" stroke-width="1.5" fill="none"/></svg><svg class="a" style="left:570px;top:145px;" width="28" height="28" viewBox="0 0 32 32"><path d="M9 3L9 24L14 19.5L18.5 29L22.5 27L18 18L25 18Z" fill="#f6f6f6" stroke="#0c0c0c" stroke-width="2.6" stroke-linejoin="round"/></svg><svg class="a" style="left:608px;top:144px;" width="28" height="28" viewBox="0 0 32 32"><rect x="3" y="8" width="27" height="20" rx="2.5" fill="#f2f2f2" stroke="#0c0c0c" stroke-width="2.6"/><rect x="5" y="4" width="7" height="6" rx="2" fill="#f2f2f2" stroke="#0c0c0c" stroke-width="2"/><rect x="6" y="12" width="5" height="13" fill="#333"/><rect x="6" y="10" width="5" height="5" fill="#d02050"/><circle cx="19" cy="19" r="7" fill="#c8c8c8" stroke="#555" stroke-width="1.5"/><circle cx="19" cy="19" r="4.3" fill="#c01848"/><path d="M17 17A3 3 0 0 1 21 17" stroke="#501020" stroke-width="2" fill="none"/><rect x="24" y="10.5" width="4" height="3" fill="#111"/></svg><div class="a " style="left:59px;top:198px;width:28px;height:2px;background:#5e5e5e"></div><svg class="a" style="left:48px;top:188px;" width="22" height="22" viewBox="0 0 24 24"><circle cx="12" cy="12" r="8.3" fill="#ececec" stroke="#111" stroke-width="2.4"/><path d="M7 12H17M12 7V17" stroke="#111" stroke-width="2.8"/></svg><div class="a " style="left:83px;top:181px;width:34px;height:36px;border-radius:13px;background:rgba(232,150,80,.6)"></div><svg class="a" style="left:85px;top:184px;" width="30" height="30" viewBox="0 0 32 32"><path d="M11 5C22 3 28 11 25 18C22 25 13 26 6 28" stroke="#2a160a" stroke-width="7" stroke-linecap="round" fill="none"/><path d="M11 5C22 3 28 11 25 18C22 25 13 26 6 28" stroke="#f0a030" stroke-width="3.8" stroke-linecap="round" fill="none"/><path d="M12 5.2C21 4 26 11 23.6 17" stroke="#ffe08a" stroke-width="1.4" fill="none"/></svg><div class="a t " style="left:126px;top:188px;color:#fff;">NurbsPath.001</div><div class="a " style="left:303.2874999999999px;top:184px;width:3px;height:30px;background:#5f5f5f"></div><div class="a " style="left:324.2874999999999px;top:180px;width:38px;height:38px;border-radius:19px;background:rgba(255,255,255,.28)"></div><svg class="a" style="left:328.287px;top:184px;opacity:0.55;" width="30" height="30" viewBox="0 0 32 32"><path d="M14 5C26 6 27 20 9 26" stroke="#1c1c1c" stroke-width="2.4" fill="none"/><g fill="#f4f4f4" stroke="#1c1c1c" stroke-width="1.8"><circle cx="14" cy="5" r="3"/><circle cx="8" cy="26" r="3"/></g></svg><svg class="a" style="left:529px;top:185px;" width="28" height="28" viewBox="0 0 32 32"><path d="M3 16C8 8 24 8 29 16C24 24 8 24 3 16Z" fill="#f4f4f4" stroke="#111" stroke-width="2.4"/><circle cx="16" cy="15" r="4.2" fill="#111"/><path d="M9 19C13 22 19 22 23 19" stroke="#999" stroke-width="1.5" fill="none"/></svg><svg class="a" style="left:570px;top:185px;" width="28" height="28" viewBox="0 0 32 32"><path d="M9 3L9 24L14 19.5L18.5 29L22.5 27L18 18L25 18Z" fill="#f6f6f6" stroke="#0c0c0c" stroke-width="2.6" stroke-linejoin="round"/></svg><svg class="a" style="left:608px;top:184px;" width="28" height="28" viewBox="0 0 32 32"><rect x="3" y="8" width="27" height="20" rx="2.5" fill="#f2f2f2" stroke="#0c0c0c" stroke-width="2.6"/><rect x="5" y="4" width="7" height="6" rx="2" fill="#f2f2f2" stroke="#0c0c0c" stroke-width="2"/><rect x="6" y="12" width="5" height="13" fill="#333"/><rect x="6" y="10" width="5" height="5" fill="#d02050"/><circle cx="19" cy="19" r="7" fill="#c8c8c8" stroke="#555" stroke-width="1.5"/><circle cx="19" cy="19" r="4.3" fill="#c01848"/><path d="M17 17A3 3 0 0 1 21 17" stroke="#501020" stroke-width="2" fill="none"/><rect x="24" y="10.5" width="4" height="3" fill="#111"/></svg><div class="a " style="left:59px;top:238px;width:28px;height:2px;background:#5e5e5e"></div><svg class="a" style="left:48px;top:228px;" width="22" height="22" viewBox="0 0 24 24"><circle cx="12" cy="12" r="8.3" fill="#ececec" stroke="#111" stroke-width="2.4"/><path d="M7 12H17" stroke="#111" stroke-width="2.8"/></svg><svg class="a" style="left:85px;top:224px;" width="30" height="30" viewBox="0 0 32 32"><path d="M16 4V18L5 25M16 18L27 24" stroke="#2a160a" stroke-width="6.5" stroke-linecap="round" fill="none"/><path d="M16 4V18L5 25M16 18L27 24" stroke="#f08c2c" stroke-width="3.4" stroke-linecap="round" fill="none"/><path d="M16 4V8M5 25L7 23.7M27 24L25 22.8" stroke="#ffe9c8" stroke-width="3" stroke-linecap="round"/></svg><div class="a t " style="left:126px;top:228px;">Path</div><svg class="a" style="left:529px;top:225px;" width="28" height="28" viewBox="0 0 32 32"><path d="M5 16C10 12 22 12 27 16C22 20 10 20 5 16Z" fill="#8a8a8a" stroke="#6a6a6a" stroke-width="1.6"/></svg><svg class="a" style="left:570px;top:225px;" width="28" height="28" viewBox="0 0 32 32"><path d="M9 3L9 24L14 19.5L18.5 29L22.5 27L18 18L25 18Z" fill="#f6f6f6" stroke="#0c0c0c" stroke-width="2.6" stroke-linejoin="round"/></svg><svg class="a" style="left:608px;top:224px;" width="28" height="28" viewBox="0 0 32 32"><rect x="3" y="8" width="27" height="20" rx="2.5" fill="#f2f2f2" stroke="#0c0c0c" stroke-width="2.6"/><rect x="5" y="4" width="7" height="6" rx="2" fill="#f2f2f2" stroke="#0c0c0c" stroke-width="2"/><rect x="6" y="12" width="5" height="13" fill="#333"/><rect x="6" y="10" width="5" height="5" fill="#d02050"/><circle cx="19" cy="19" r="7" fill="#c8c8c8" stroke="#555" stroke-width="1.5"/><circle cx="19" cy="19" r="4.3" fill="#c01848"/><path d="M17 17A3 3 0 0 1 21 17" stroke="#501020" stroke-width="2" fill="none"/><rect x="24" y="10.5" width="4" height="3" fill="#111"/></svg><div class="a " style="left:99px;top:278px;width:28px;height:2px;background:#5e5e5e"></div><svg class="a" style="left:88px;top:268px;" width="22" height="22" viewBox="0 0 24 24"><circle cx="12" cy="12" r="8.3" fill="#ececec" stroke="#111" stroke-width="2.4"/><path d="M7 12H17" stroke="#111" stroke-width="2.8"/></svg><svg class="a" style="left:125px;top:264px;" width="30" height="30" viewBox="0 0 32 32"><path d="M5 6H27L16 28Z" stroke="#2a160a" stroke-width="7" stroke-linejoin="round" fill="none"/><path d="M5 6H27L16 28Z" stroke="#f09030" stroke-width="4" stroke-linejoin="round" fill="none"/><path d="M6 5.5H26" stroke="#ffd9a0" stroke-width="1.5"/></svg><div class="a t " style="left:166px;top:268px;">Plane</div><svg class="a" style="left:529px;top:265px;" width="28" height="28" viewBox="0 0 32 32"><path d="M5 16C10 12 22 12 27 16C22 20 10 20 5 16Z" fill="#8a8a8a" stroke="#6a6a6a" stroke-width="1.6"/></svg><svg class="a" style="left:570px;top:265px;" width="28" height="28" viewBox="0 0 32 32"><path d="M9 3L9 24L14 19.5L18.5 29L22.5 27L18 18L25 18Z" fill="#f6f6f6" stroke="#0c0c0c" stroke-width="2.6" stroke-linejoin="round"/></svg><svg class="a" style="left:608px;top:264px;" width="28" height="28" viewBox="0 0 32 32"><rect x="3" y="8" width="27" height="20" rx="2.5" fill="#f2f2f2" stroke="#0c0c0c" stroke-width="2.6"/><rect x="5" y="4" width="7" height="6" rx="2" fill="#f2f2f2" stroke="#0c0c0c" stroke-width="2"/><rect x="6" y="12" width="5" height="13" fill="#333"/><rect x="6" y="10" width="5" height="5" fill="#d02050"/><circle cx="19" cy="19" r="7" fill="#c8c8c8" stroke="#555" stroke-width="1.5"/><circle cx="19" cy="19" r="4.3" fill="#c01848"/><path d="M17 17A3 3 0 0 1 21 17" stroke="#501020" stroke-width="2" fill="none"/><rect x="24" y="10.5" width="4" height="3" fill="#111"/></svg><svg class="a" style="left:165px;top:304px;" width="30" height="30" viewBox="0 0 32 32"><path d="M6 7H26L16 27Z" stroke="#1c1c1c" stroke-width="2.2" fill="none"/><g fill="#f4f4f4" stroke="#1c1c1c" stroke-width="2"><circle cx="6" cy="7" r="3.4"/><circle cx="26" cy="7" r="3.4"/><circle cx="16" cy="27" r="3.4"/></g></svg><div class="a t " style="left:206px;top:308px;">Plane</div><div class="a " style="left:99px;top:358px;width:28px;height:2px;background:#5e5e5e"></div><svg class="a" style="left:88px;top:348px;" width="22" height="22" viewBox="0 0 24 24"><circle cx="12" cy="12" r="8.3" fill="#ececec" stroke="#111" stroke-width="2.4"/><path d="M7 12H17M12 7V17" stroke="#111" stroke-width="2.8"/></svg><svg class="a" style="left:125px;top:344px;" width="30" height="30" viewBox="0 0 32 32"><path d="M5 6H27L16 28Z" stroke="#2a160a" stroke-width="7" stroke-linejoin="round" fill="none"/><path d="M5 6H27L16 28Z" stroke="#f09030" stroke-width="4" stroke-linejoin="round" fill="none"/><path d="M6 5.5H26" stroke="#ffd9a0" stroke-width="1.5"/></svg><div class="a t " style="left:166px;top:348px;">Plane.001</div><div class="a " style="left:292.3468750000002px;top:344px;width:3px;height:30px;background:#5f5f5f"></div><svg class="a" style="left:317.347px;top:344px;opacity:0.5;" width="30" height="30" viewBox="0 0 32 32"><path d="M6 7H26L16 27Z" stroke="#1c1c1c" stroke-width="2.2" fill="none"/><g fill="#f4f4f4" stroke="#1c1c1c" stroke-width="2"><circle cx="6" cy="7" r="3.4"/><circle cx="26" cy="7" r="3.4"/><circle cx="16" cy="27" r="3.4"/></g></svg><svg class="a" style="left:529px;top:345px;" width="28" height="28" viewBox="0 0 32 32"><path d="M5 16C10 12 22 12 27 16C22 20 10 20 5 16Z" fill="#8a8a8a" stroke="#6a6a6a" stroke-width="1.6"/></svg><svg class="a" style="left:570px;top:345px;" width="28" height="28" viewBox="0 0 32 32"><path d="M9 3L9 24L14 19.5L18.5 29L22.5 27L18 18L25 18Z" fill="#f6f6f6" stroke="#0c0c0c" stroke-width="2.6" stroke-linejoin="round"/></svg><svg class="a" style="left:608px;top:344px;" width="28" height="28" viewBox="0 0 32 32"><rect x="3" y="8" width="27" height="20" rx="2.5" fill="#f2f2f2" stroke="#0c0c0c" stroke-width="2.6"/><rect x="5" y="4" width="7" height="6" rx="2" fill="#f2f2f2" stroke="#0c0c0c" stroke-width="2"/><rect x="6" y="12" width="5" height="13" fill="#333"/><rect x="6" y="10" width="5" height="5" fill="#d02050"/><circle cx="19" cy="19" r="7" fill="#c8c8c8" stroke="#555" stroke-width="1.5"/><circle cx="19" cy="19" r="4.3" fill="#c01848"/><path d="M17 17A3 3 0 0 1 21 17" stroke="#501020" stroke-width="2" fill="none"/><rect x="24" y="10.5" width="4" height="3" fill="#111"/></svg><div class="a " style="left:99px;top:398px;width:28px;height:2px;background:#5e5e5e"></div><svg class="a" style="left:88px;top:388px;" width="22" height="22" viewBox="0 0 24 24"><circle cx="12" cy="12" r="8.3" fill="#ececec" stroke="#111" stroke-width="2.4"/><path d="M7 12H17M12 7V17" stroke="#111" stroke-width="2.8"/></svg><svg class="a" style="left:125px;top:384px;" width="30" height="30" viewBox="0 0 32 32"><path d="M5 6H27L16 28Z" stroke="#2a160a" stroke-width="7" stroke-linejoin="round" fill="none"/><path d="M5 6H27L16 28Z" stroke="#f09030" stroke-width="4" stroke-linejoin="round" fill="none"/><path d="M6 5.5H26" stroke="#ffd9a0" stroke-width="1.5"/></svg><div class="a t " style="left:166px;top:388px;">Plane.002</div><div class="a " style="left:292.3468750000002px;top:384px;width:3px;height:30px;background:#5f5f5f"></div><svg class="a" style="left:317.347px;top:384px;opacity:0.5;" width="30" height="30" viewBox="0 0 32 32"><path d="M6 7H26L16 27Z" stroke="#1c1c1c" stroke-width="2.2" fill="none"/><g fill="#f4f4f4" stroke="#1c1c1c" stroke-width="2"><circle cx="6" cy="7" r="3.4"/><circle cx="26" cy="7" r="3.4"/><circle cx="16" cy="27" r="3.4"/></g></svg><svg class="a" style="left:529px;top:385px;" width="28" height="28" viewBox="0 0 32 32"><path d="M5 16C10 12 22 12 27 16C22 20 10 20 5 16Z" fill="#8a8a8a" stroke="#6a6a6a" stroke-width="1.6"/></svg><svg class="a" style="left:570px;top:385px;" width="28" height="28" viewBox="0 0 32 32"><path d="M9 3L9 24L14 19.5L18.5 29L22.5 27L18 18L25 18Z" fill="#f6f6f6" stroke="#0c0c0c" stroke-width="2.6" stroke-linejoin="round"/></svg><svg class="a" style="left:608px;top:384px;" width="28" height="28" viewBox="0 0 32 32"><rect x="3" y="8" width="27" height="20" rx="2.5" fill="#f2f2f2" stroke="#0c0c0c" stroke-width="2.6"/><rect x="5" y="4" width="7" height="6" rx="2" fill="#f2f2f2" stroke="#0c0c0c" stroke-width="2"/><rect x="6" y="12" width="5" height="13" fill="#333"/><rect x="6" y="10" width="5" height="5" fill="#d02050"/><circle cx="19" cy="19" r="7" fill="#c8c8c8" stroke="#555" stroke-width="1.5"/><circle cx="19" cy="19" r="4.3" fill="#c01848"/><path d="M17 17A3 3 0 0 1 21 17" stroke="#501020" stroke-width="2" fill="none"/><rect x="24" y="10.5" width="4" height="3" fill="#111"/></svg><div class="a " style="left:99px;top:438px;width:28px;height:2px;background:#5e5e5e"></div><svg class="a" style="left:88px;top:428px;" width="22" height="22" viewBox="0 0 24 24"><circle cx="12" cy="12" r="8.3" fill="#ececec" stroke="#111" stroke-width="2.4"/><path d="M7 12H17M12 7V17" stroke="#111" stroke-width="2.8"/></svg><svg class="a" style="left:125px;top:424px;" width="30" height="30" viewBox="0 0 32 32"><path d="M5 6H27L16 28Z" stroke="#2a160a" stroke-width="7" stroke-linejoin="round" fill="none"/><path d="M5 6H27L16 28Z" stroke="#f09030" stroke-width="4" stroke-linejoin="round" fill="none"/><path d="M6 5.5H26" stroke="#ffd9a0" stroke-width="1.5"/></svg><div class="a t " style="left:166px;top:428px;">Plane.003</div><div class="a " style="left:292.3468750000002px;top:424px;width:3px;height:30px;background:#5f5f5f"></div><svg class="a" style="left:317.347px;top:424px;opacity:0.5;" width="30" height="30" viewBox="0 0 32 32"><path d="M6 7H26L16 27Z" stroke="#1c1c1c" stroke-width="2.2" fill="none"/><g fill="#f4f4f4" stroke="#1c1c1c" stroke-width="2"><circle cx="6" cy="7" r="3.4"/><circle cx="26" cy="7" r="3.4"/><circle cx="16" cy="27" r="3.4"/></g></svg><svg class="a" style="left:529px;top:425px;" width="28" height="28" viewBox="0 0 32 32"><path d="M5 16C10 12 22 12 27 16C22 20 10 20 5 16Z" fill="#8a8a8a" stroke="#6a6a6a" stroke-width="1.6"/></svg><svg class="a" style="left:570px;top:425px;" width="28" height="28" viewBox="0 0 32 32"><path d="M9 3L9 24L14 19.5L18.5 29L22.5 27L18 18L25 18Z" fill="#f6f6f6" stroke="#0c0c0c" stroke-width="2.6" stroke-linejoin="round"/></svg><svg class="a" style="left:608px;top:424px;" width="28" height="28" viewBox="0 0 32 32"><rect x="3" y="8" width="27" height="20" rx="2.5" fill="#f2f2f2" stroke="#0c0c0c" stroke-width="2.6"/><rect x="5" y="4" width="7" height="6" rx="2" fill="#f2f2f2" stroke="#0c0c0c" stroke-width="2"/><rect x="6" y="12" width="5" height="13" fill="#333"/><rect x="6" y="10" width="5" height="5" fill="#d02050"/><circle cx="19" cy="19" r="7" fill="#c8c8c8" stroke="#555" stroke-width="1.5"/><circle cx="19" cy="19" r="4.3" fill="#c01848"/><path d="M17 17A3 3 0 0 1 21 17" stroke="#501020" stroke-width="2" fill="none"/><rect x="24" y="10.5" width="4" height="3" fill="#111"/></svg><div class="a " style="left:99px;top:478px;width:28px;height:2px;background:#5e5e5e"></div><svg class="a" style="left:88px;top:468px;" width="22" height="22" viewBox="0 0 24 24"><circle cx="12" cy="12" r="8.3" fill="#ececec" stroke="#111" stroke-width="2.4"/><path d="M7 12H17M12 7V17" stroke="#111" stroke-width="2.8"/></svg><svg class="a" style="left:125px;top:464px;" width="30" height="30" viewBox="0 0 32 32"><path d="M5 6H27L16 28Z" stroke="#2a160a" stroke-width="7" stroke-linejoin="round" fill="none"/><path d="M5 6H27L16 28Z" stroke="#f09030" stroke-width="4" stroke-linejoin="round" fill="none"/><path d="M6 5.5H26" stroke="#ffd9a0" stroke-width="1.5"/></svg><div class="a t " style="left:166px;top:468px;">Plane.004</div><div class="a " style="left:292.3468750000002px;top:464px;width:3px;height:30px;background:#5f5f5f"></div><svg class="a" style="left:317.347px;top:464px;opacity:0.5;" width="30" height="30" viewBox="0 0 32 32"><path d="M6 7H26L16 27Z" stroke="#1c1c1c" stroke-width="2.2" fill="none"/><g fill="#f4f4f4" stroke="#1c1c1c" stroke-width="2"><circle cx="6" cy="7" r="3.4"/><circle cx="26" cy="7" r="3.4"/><circle cx="16" cy="27" r="3.4"/></g></svg><svg class="a" style="left:529px;top:465px;" width="28" height="28" viewBox="0 0 32 32"><path d="M5 16C10 12 22 12 27 16C22 20 10 20 5 16Z" fill="#8a8a8a" stroke="#6a6a6a" stroke-width="1.6"/></svg><svg class="a" style="left:570px;top:465px;" width="28" height="28" viewBox="0 0 32 32"><path d="M9 3L9 24L14 19.5L18.5 29L22.5 27L18 18L25 18Z" fill="#f6f6f6" stroke="#0c0c0c" stroke-width="2.6" stroke-linejoin="round"/></svg><svg class="a" style="left:608px;top:464px;" width="28" height="28" viewBox="0 0 32 32"><rect x="3" y="8" width="27" height="20" rx="2.5" fill="#f2f2f2" stroke="#0c0c0c" stroke-width="2.6"/><rect x="5" y="4" width="7" height="6" rx="2" fill="#f2f2f2" stroke="#0c0c0c" stroke-width="2"/><rect x="6" y="12" width="5" height="13" fill="#333"/><rect x="6" y="10" width="5" height="5" fill="#d02050"/><circle cx="19" cy="19" r="7" fill="#c8c8c8" stroke="#555" stroke-width="1.5"/><circle cx="19" cy="19" r="4.3" fill="#c01848"/><path d="M17 17A3 3 0 0 1 21 17" stroke="#501020" stroke-width="2" fill="none"/><rect x="24" y="10.5" width="4" height="3" fill="#111"/></svg><div class="a " style="left:99px;top:518px;width:28px;height:2px;background:#5e5e5e"></div><svg class="a" style="left:88px;top:508px;" width="22" height="22" viewBox="0 0 24 24"><circle cx="12" cy="12" r="8.3" fill="#ececec" stroke="#111" stroke-width="2.4"/><path d="M7 12H17M12 7V17" stroke="#111" stroke-width="2.8"/></svg><svg class="a" style="left:125px;top:504px;" width="30" height="30" viewBox="0 0 32 32"><path d="M5 6H27L16 28Z" stroke="#2a160a" stroke-width="7" stroke-linejoin="round" fill="none"/><path d="M5 6H27L16 28Z" stroke="#f09030" stroke-width="4" stroke-linejoin="round" fill="none"/><path d="M6 5.5H26" stroke="#ffd9a0" stroke-width="1.5"/></svg><div class="a t " style="left:166px;top:508px;">Plane.005</div><div class="a " style="left:292.3468750000002px;top:504px;width:3px;height:30px;background:#5f5f5f"></div><svg class="a" style="left:317.347px;top:504px;opacity:0.5;" width="30" height="30" viewBox="0 0 32 32"><path d="M6 7H26L16 27Z" stroke="#1c1c1c" stroke-width="2.2" fill="none"/><g fill="#f4f4f4" stroke="#1c1c1c" stroke-width="2"><circle cx="6" cy="7" r="3.4"/><circle cx="26" cy="7" r="3.4"/><circle cx="16" cy="27" r="3.4"/></g></svg><svg class="a" style="left:529px;top:505px;" width="28" height="28" viewBox="0 0 32 32"><path d="M5 16C10 12 22 12 27 16C22 20 10 20 5 16Z" fill="#8a8a8a" stroke="#6a6a6a" stroke-width="1.6"/></svg><svg class="a" style="left:570px;top:505px;" width="28" height="28" viewBox="0 0 32 32"><path d="M9 3L9 24L14 19.5L18.5 29L22.5 27L18 18L25 18Z" fill="#f6f6f6" stroke="#0c0c0c" stroke-width="2.6" stroke-linejoin="round"/></svg><svg class="a" style="left:608px;top:504px;" width="28" height="28" viewBox="0 0 32 32"><rect x="3" y="8" width="27" height="20" rx="2.5" fill="#f2f2f2" stroke="#0c0c0c" stroke-width="2.6"/><rect x="5" y="4" width="7" height="6" rx="2" fill="#f2f2f2" stroke="#0c0c0c" stroke-width="2"/><rect x="6" y="12" width="5" height="13" fill="#333"/><rect x="6" y="10" width="5" height="5" fill="#d02050"/><circle cx="19" cy="19" r="7" fill="#c8c8c8" stroke="#555" stroke-width="1.5"/><circle cx="19" cy="19" r="4.3" fill="#c01848"/><path d="M17 17A3 3 0 0 1 21 17" stroke="#501020" stroke-width="2" fill="none"/><rect x="24" y="10.5" width="4" height="3" fill="#111"/></svg><div class="a " style="left:99px;top:558px;width:28px;height:2px;background:#5e5e5e"></div><svg class="a" style="left:88px;top:548px;" width="22" height="22" viewBox="0 0 24 24"><circle cx="12" cy="12" r="8.3" fill="#ececec" stroke="#111" stroke-width="2.4"/><path d="M7 12H17M12 7V17" stroke="#111" stroke-width="2.8"/></svg><svg class="a" style="left:125px;top:544px;" width="30" height="30" viewBox="0 0 32 32"><path d="M5 6H27L16 28Z" stroke="#2a160a" stroke-width="7" stroke-linejoin="round" fill="none"/><path d="M5 6H27L16 28Z" stroke="#f09030" stroke-width="4" stroke-linejoin="round" fill="none"/><path d="M6 5.5H26" stroke="#ffd9a0" stroke-width="1.5"/></svg><div class="a t " style="left:166px;top:548px;">Plane.006</div><div class="a " style="left:292.3468750000002px;top:544px;width:3px;height:30px;background:#5f5f5f"></div><svg class="a" style="left:317.347px;top:544px;opacity:0.5;" width="30" height="30" viewBox="0 0 32 32"><path d="M6 7H26L16 27Z" stroke="#1c1c1c" stroke-width="2.2" fill="none"/><g fill="#f4f4f4" stroke="#1c1c1c" stroke-width="2"><circle cx="6" cy="7" r="3.4"/><circle cx="26" cy="7" r="3.4"/><circle cx="16" cy="27" r="3.4"/></g></svg><svg class="a" style="left:529px;top:545px;" width="28" height="28" viewBox="0 0 32 32"><path d="M5 16C10 12 22 12 27 16C22 20 10 20 5 16Z" fill="#8a8a8a" stroke="#6a6a6a" stroke-width="1.6"/></svg><svg class="a" style="left:570px;top:545px;" width="28" height="28" viewBox="0 0 32 32"><path d="M9 3L9 24L14 19.5L18.5 29L22.5 27L18 18L25 18Z" fill="#f6f6f6" stroke="#0c0c0c" stroke-width="2.6" stroke-linejoin="round"/></svg><svg class="a" style="left:608px;top:544px;" width="28" height="28" viewBox="0 0 32 32"><rect x="3" y="8" width="27" height="20" rx="2.5" fill="#f2f2f2" stroke="#0c0c0c" stroke-width="2.6"/><rect x="5" y="4" width="7" height="6" rx="2" fill="#f2f2f2" stroke="#0c0c0c" stroke-width="2"/><rect x="6" y="12" width="5" height="13" fill="#333"/><rect x="6" y="10" width="5" height="5" fill="#d02050"/><circle cx="19" cy="19" r="7" fill="#c8c8c8" stroke="#555" stroke-width="1.5"/><circle cx="19" cy="19" r="4.3" fill="#c01848"/><path d="M17 17A3 3 0 0 1 21 17" stroke="#501020" stroke-width="2" fill="none"/><rect x="24" y="10.5" width="4" height="3" fill="#111"/></svg><div class="a " style="left:99px;top:598px;width:28px;height:2px;background:#5e5e5e"></div><svg class="a" style="left:88px;top:588px;" width="22" height="22" viewBox="0 0 24 24"><circle cx="12" cy="12" r="8.3" fill="#ececec" stroke="#111" stroke-width="2.4"/><path d="M7 12H17M12 7V17" stroke="#111" stroke-width="2.8"/></svg><svg class="a" style="left:125px;top:584px;" width="30" height="30" viewBox="0 0 32 32"><path d="M5 6H27L16 28Z" stroke="#2a160a" stroke-width="7" stroke-linejoin="round" fill="none"/><path d="M5 6H27L16 28Z" stroke="#f09030" stroke-width="4" stroke-linejoin="round" fill="none"/><path d="M6 5.5H26" stroke="#ffd9a0" stroke-width="1.5"/></svg><div class="a t " style="left:166px;top:588px;">Plane.007</div><div class="a " style="left:292.3468750000002px;top:584px;width:3px;height:30px;background:#5f5f5f"></div><svg class="a" style="left:317.347px;top:584px;opacity:0.5;" width="30" height="30" viewBox="0 0 32 32"><path d="M6 7H26L16 27Z" stroke="#1c1c1c" stroke-width="2.2" fill="none"/><g fill="#f4f4f4" stroke="#1c1c1c" stroke-width="2"><circle cx="6" cy="7" r="3.4"/><circle cx="26" cy="7" r="3.4"/><circle cx="16" cy="27" r="3.4"/></g></svg><svg class="a" style="left:529px;top:585px;" width="28" height="28" viewBox="0 0 32 32"><path d="M5 16C10 12 22 12 27 16C22 20 10 20 5 16Z" fill="#8a8a8a" stroke="#6a6a6a" stroke-width="1.6"/></svg><svg class="a" style="left:570px;top:585px;" width="28" height="28" viewBox="0 0 32 32"><path d="M9 3L9 24L14 19.5L18.5 29L22.5 27L18 18L25 18Z" fill="#f6f6f6" stroke="#0c0c0c" stroke-width="2.6" stroke-linejoin="round"/></svg><svg class="a" style="left:608px;top:584px;" width="28" height="28" viewBox="0 0 32 32"><rect x="3" y="8" width="27" height="20" rx="2.5" fill="#f2f2f2" stroke="#0c0c0c" stroke-width="2.6"/><rect x="5" y="4" width="7" height="6" rx="2" fill="#f2f2f2" stroke="#0c0c0c" stroke-width="2"/><rect x="6" y="12" width="5" height="13" fill="#333"/><rect x="6" y="10" width="5" height="5" fill="#d02050"/><circle cx="19" cy="19" r="7" fill="#c8c8c8" stroke="#555" stroke-width="1.5"/><circle cx="19" cy="19" r="4.3" fill="#c01848"/><path d="M17 17A3 3 0 0 1 21 17" stroke="#501020" stroke-width="2" fill="none"/><rect x="24" y="10.5" width="4" height="3" fill="#111"/></svg><div class="a " style="left:99px;top:638px;width:28px;height:2px;background:#5e5e5e"></div><svg class="a" style="left:88px;top:628px;" width="22" height="22" viewBox="0 0 24 24"><circle cx="12" cy="12" r="8.3" fill="#ececec" stroke="#111" stroke-width="2.4"/><path d="M7 12H17M12 7V17" stroke="#111" stroke-width="2.8"/></svg><svg class="a" style="left:125px;top:624px;" width="30" height="30" viewBox="0 0 32 32"><path d="M5 6H27L16 28Z" stroke="#2a160a" stroke-width="7" stroke-linejoin="round" fill="none"/><path d="M5 6H27L16 28Z" stroke="#f09030" stroke-width="4" stroke-linejoin="round" fill="none"/><path d="M6 5.5H26" stroke="#ffd9a0" stroke-width="1.5"/></svg><div class="a t " style="left:166px;top:628px;">Plane.008</div><div class="a " style="left:292.3468750000002px;top:624px;width:3px;height:30px;background:#5f5f5f"></div><svg class="a" style="left:317.347px;top:624px;opacity:0.5;" width="30" height="30" viewBox="0 0 32 32"><path d="M6 7H26L16 27Z" stroke="#1c1c1c" stroke-width="2.2" fill="none"/><g fill="#f4f4f4" stroke="#1c1c1c" stroke-width="2"><circle cx="6" cy="7" r="3.4"/><circle cx="26" cy="7" r="3.4"/><circle cx="16" cy="27" r="3.4"/></g></svg><svg class="a" style="left:529px;top:625px;" width="28" height="28" viewBox="0 0 32 32"><path d="M5 16C10 12 22 12 27 16C22 20 10 20 5 16Z" fill="#8a8a8a" stroke="#6a6a6a" stroke-width="1.6"/></svg><svg class="a" style="left:570px;top:625px;" width="28" height="28" viewBox="0 0 32 32"><path d="M9 3L9 24L14 19.5L18.5 29L22.5 27L18 18L25 18Z" fill="#f6f6f6" stroke="#0c0c0c" stroke-width="2.6" stroke-linejoin="round"/></svg><svg class="a" style="left:608px;top:624px;" width="28" height="28" viewBox="0 0 32 32"><rect x="3" y="8" width="27" height="20" rx="2.5" fill="#f2f2f2" stroke="#0c0c0c" stroke-width="2.6"/><rect x="5" y="4" width="7" height="6" rx="2" fill="#f2f2f2" stroke="#0c0c0c" stroke-width="2"/><rect x="6" y="12" width="5" height="13" fill="#333"/><rect x="6" y="10" width="5" height="5" fill="#d02050"/><circle cx="19" cy="19" r="7" fill="#c8c8c8" stroke="#555" stroke-width="1.5"/><circle cx="19" cy="19" r="4.3" fill="#c01848"/><path d="M17 17A3 3 0 0 1 21 17" stroke="#501020" stroke-width="2" fill="none"/><rect x="24" y="10.5" width="4" height="3" fill="#111"/></svg><div class="a " style="left:99px;top:678px;width:28px;height:2px;background:#5e5e5e"></div><svg class="a" style="left:88px;top:668px;" width="22" height="22" viewBox="0 0 24 24"><circle cx="12" cy="12" r="8.3" fill="#ececec" stroke="#111" stroke-width="2.4"/><path d="M7 12H17M12 7V17" stroke="#111" stroke-width="2.8"/></svg><svg class="a" style="left:125px;top:664px;" width="30" height="30" viewBox="0 0 32 32"><path d="M5 6H27L16 28Z" stroke="#2a160a" stroke-width="7" stroke-linejoin="round" fill="none"/><path d="M5 6H27L16 28Z" stroke="#f09030" stroke-width="4" stroke-linejoin="round" fill="none"/><path d="M6 5.5H26" stroke="#ffd9a0" stroke-width="1.5"/></svg><div class="a t " style="left:166px;top:668px;">Plane.009</div><div class="a " style="left:292.3468750000002px;top:664px;width:3px;height:30px;background:#5f5f5f"></div><svg class="a" style="left:317.347px;top:664px;opacity:0.5;" width="30" height="30" viewBox="0 0 32 32"><path d="M6 7H26L16 27Z" stroke="#1c1c1c" stroke-width="2.2" fill="none"/><g fill="#f4f4f4" stroke="#1c1c1c" stroke-width="2"><circle cx="6" cy="7" r="3.4"/><circle cx="26" cy="7" r="3.4"/><circle cx="16" cy="27" r="3.4"/></g></svg><svg class="a" style="left:529px;top:665px;" width="28" height="28" viewBox="0 0 32 32"><path d="M5 16C10 12 22 12 27 16C22 20 10 20 5 16Z" fill="#8a8a8a" stroke="#6a6a6a" stroke-width="1.6"/></svg><svg class="a" style="left:570px;top:665px;" width="28" height="28" viewBox="0 0 32 32"><path d="M9 3L9 24L14 19.5L18.5 29L22.5 27L18 18L25 18Z" fill="#f6f6f6" stroke="#0c0c0c" stroke-width="2.6" stroke-linejoin="round"/></svg><svg class="a" style="left:608px;top:664px;" width="28" height="28" viewBox="0 0 32 32"><rect x="3" y="8" width="27" height="20" rx="2.5" fill="#f2f2f2" stroke="#0c0c0c" stroke-width="2.6"/><rect x="5" y="4" width="7" height="6" rx="2" fill="#f2f2f2" stroke="#0c0c0c" stroke-width="2"/><rect x="6" y="12" width="5" height="13" fill="#333"/><rect x="6" y="10" width="5" height="5" fill="#d02050"/><circle cx="19" cy="19" r="7" fill="#c8c8c8" stroke="#555" stroke-width="1.5"/><circle cx="19" cy="19" r="4.3" fill="#c01848"/><path d="M17 17A3 3 0 0 1 21 17" stroke="#501020" stroke-width="2" fill="none"/><rect x="24" y="10.5" width="4" height="3" fill="#111"/></svg><div class="a " style="left:99px;top:718px;width:28px;height:2px;background:#5e5e5e"></div><svg class="a" style="left:88px;top:708px;" width="22" height="22" viewBox="0 0 24 24"><circle cx="12" cy="12" r="8.3" fill="#ececec" stroke="#111" stroke-width="2.4"/><path d="M7 12H17M12 7V17" stroke="#111" stroke-width="2.8"/></svg><svg class="a" style="left:125px;top:704px;" width="30" height="30" viewBox="0 0 32 32"><path d="M5 6H27L16 28Z" stroke="#2a160a" stroke-width="7" stroke-linejoin="round" fill="none"/><path d="M5 6H27L16 28Z" stroke="#f09030" stroke-width="4" stroke-linejoin="round" fill="none"/><path d="M6 5.5H26" stroke="#ffd9a0" stroke-width="1.5"/></svg><div class="a t " style="left:166px;top:708px;">Plane.010</div><div class="a " style="left:292.3468750000002px;top:704px;width:3px;height:30px;background:#5f5f5f"></div><svg class="a" style="left:317.347px;top:704px;opacity:0.5;" width="30" height="30" viewBox="0 0 32 32"><path d="M6 7H26L16 27Z" stroke="#1c1c1c" stroke-width="2.2" fill="none"/><g fill="#f4f4f4" stroke="#1c1c1c" stroke-width="2"><circle cx="6" cy="7" r="3.4"/><circle cx="26" cy="7" r="3.4"/><circle cx="16" cy="27" r="3.4"/></g></svg><svg class="a" style="left:529px;top:705px;" width="28" height="28" viewBox="0 0 32 32"><path d="M5 16C10 12 22 12 27 16C22 20 10 20 5 16Z" fill="#8a8a8a" stroke="#6a6a6a" stroke-width="1.6"/></svg><svg class="a" style="left:570px;top:705px;" width="28" height="28" viewBox="0 0 32 32"><path d="M9 3L9 24L14 19.5L18.5 29L22.5 27L18 18L25 18Z" fill="#f6f6f6" stroke="#0c0c0c" stroke-width="2.6" stroke-linejoin="round"/></svg><svg class="a" style="left:608px;top:704px;" width="28" height="28" viewBox="0 0 32 32"><rect x="3" y="8" width="27" height="20" rx="2.5" fill="#f2f2f2" stroke="#0c0c0c" stroke-width="2.6"/><rect x="5" y="4" width="7" height="6" rx="2" fill="#f2f2f2" stroke="#0c0c0c" stroke-width="2"/><rect x="6" y="12" width="5" height="13" fill="#333"/><rect x="6" y="10" width="5" height="5" fill="#d02050"/><circle cx="19" cy="19" r="7" fill="#c8c8c8" stroke="#555" stroke-width="1.5"/><circle cx="19" cy="19" r="4.3" fill="#c01848"/><path d="M17 17A3 3 0 0 1 21 17" stroke="#501020" stroke-width="2" fill="none"/><rect x="24" y="10.5" width="4" height="3" fill="#111"/></svg><div class="a " style="left:99px;top:758px;width:28px;height:2px;background:#5e5e5e"></div><svg class="a" style="left:88px;top:748px;" width="22" height="22" viewBox="0 0 24 24"><circle cx="12" cy="12" r="8.3" fill="#ececec" stroke="#111" stroke-width="2.4"/><path d="M7 12H17M12 7V17" stroke="#111" stroke-width="2.8"/></svg><svg class="a" style="left:125px;top:744px;" width="30" height="30" viewBox="0 0 32 32"><path d="M5 6H27L16 28Z" stroke="#2a160a" stroke-width="7" stroke-linejoin="round" fill="none"/><path d="M5 6H27L16 28Z" stroke="#f09030" stroke-width="4" stroke-linejoin="round" fill="none"/><path d="M6 5.5H26" stroke="#ffd9a0" stroke-width="1.5"/></svg><div class="a t " style="left:166px;top:748px;">Plane.011</div><div class="a " style="left:292.3468750000002px;top:744px;width:3px;height:30px;background:#5f5f5f"></div><svg class="a" style="left:317.347px;top:744px;opacity:0.5;" width="30" height="30" viewBox="0 0 32 32"><path d="M6 7H26L16 27Z" stroke="#1c1c1c" stroke-width="2.2" fill="none"/><g fill="#f4f4f4" stroke="#1c1c1c" stroke-width="2"><circle cx="6" cy="7" r="3.4"/><circle cx="26" cy="7" r="3.4"/><circle cx="16" cy="27" r="3.4"/></g></svg><svg class="a" style="left:529px;top:745px;" width="28" height="28" viewBox="0 0 32 32"><path d="M5 16C10 12 22 12 27 16C22 20 10 20 5 16Z" fill="#8a8a8a" stroke="#6a6a6a" stroke-width="1.6"/></svg><svg class="a" style="left:570px;top:745px;" width="28" height="28" viewBox="0 0 32 32"><path d="M9 3L9 24L14 19.5L18.5 29L22.5 27L18 18L25 18Z" fill="#f6f6f6" stroke="#0c0c0c" stroke-width="2.6" stroke-linejoin="round"/></svg><svg class="a" style="left:608px;top:744px;" width="28" height="28" viewBox="0 0 32 32"><rect x="3" y="8" width="27" height="20" rx="2.5" fill="#f2f2f2" stroke="#0c0c0c" stroke-width="2.6"/><rect x="5" y="4" width="7" height="6" rx="2" fill="#f2f2f2" stroke="#0c0c0c" stroke-width="2"/><rect x="6" y="12" width="5" height="13" fill="#333"/><rect x="6" y="10" width="5" height="5" fill="#d02050"/><circle cx="19" cy="19" r="7" fill="#c8c8c8" stroke="#555" stroke-width="1.5"/><circle cx="19" cy="19" r="4.3" fill="#c01848"/><path d="M17 17A3 3 0 0 1 21 17" stroke="#501020" stroke-width="2" fill="none"/><rect x="24" y="10.5" width="4" height="3" fill="#111"/></svg><div class="a " style="left:99px;top:798px;width:28px;height:2px;background:#5e5e5e"></div><svg class="a" style="left:88px;top:788px;" width="22" height="22" viewBox="0 0 24 24"><circle cx="12" cy="12" r="8.3" fill="#ececec" stroke="#111" stroke-width="2.4"/><path d="M7 12H17M12 7V17" stroke="#111" stroke-width="2.8"/></svg><svg class="a" style="left:125px;top:784px;" width="30" height="30" viewBox="0 0 32 32"><path d="M5 6H27L16 28Z" stroke="#2a160a" stroke-width="7" stroke-linejoin="round" fill="none"/><path d="M5 6H27L16 28Z" stroke="#f09030" stroke-width="4" stroke-linejoin="round" fill="none"/><path d="M6 5.5H26" stroke="#ffd9a0" stroke-width="1.5"/></svg><div class="a t " style="left:166px;top:788px;">Plane.012</div><div class="a " style="left:292.3468750000002px;top:784px;width:3px;height:30px;background:#5f5f5f"></div><svg class="a" style="left:317.347px;top:784px;opacity:0.5;" width="30" height="30" viewBox="0 0 32 32"><path d="M6 7H26L16 27Z" stroke="#1c1c1c" stroke-width="2.2" fill="none"/><g fill="#f4f4f4" stroke="#1c1c1c" stroke-width="2"><circle cx="6" cy="7" r="3.4"/><circle cx="26" cy="7" r="3.4"/><circle cx="16" cy="27" r="3.4"/></g></svg><svg class="a" style="left:529px;top:785px;" width="28" height="28" viewBox="0 0 32 32"><path d="M5 16C10 12 22 12 27 16C22 20 10 20 5 16Z" fill="#8a8a8a" stroke="#6a6a6a" stroke-width="1.6"/></svg><svg class="a" style="left:570px;top:785px;" width="28" height="28" viewBox="0 0 32 32"><path d="M9 3L9 24L14 19.5L18.5 29L22.5 27L18 18L25 18Z" fill="#f6f6f6" stroke="#0c0c0c" stroke-width="2.6" stroke-linejoin="round"/></svg><svg class="a" style="left:608px;top:784px;" width="28" height="28" viewBox="0 0 32 32"><rect x="3" y="8" width="27" height="20" rx="2.5" fill="#f2f2f2" stroke="#0c0c0c" stroke-width="2.6"/><rect x="5" y="4" width="7" height="6" rx="2" fill="#f2f2f2" stroke="#0c0c0c" stroke-width="2"/><rect x="6" y="12" width="5" height="13" fill="#333"/><rect x="6" y="10" width="5" height="5" fill="#d02050"/><circle cx="19" cy="19" r="7" fill="#c8c8c8" stroke="#555" stroke-width="1.5"/><circle cx="19" cy="19" r="4.3" fill="#c01848"/><path d="M17 17A3 3 0 0 1 21 17" stroke="#501020" stroke-width="2" fill="none"/><rect x="24" y="10.5" width="4" height="3" fill="#111"/></svg><div class="a " style="left:99px;top:838px;width:28px;height:2px;background:#5e5e5e"></div><svg class="a" style="left:88px;top:828px;" width="22" height="22" viewBox="0 0 24 24"><circle cx="12" cy="12" r="8.3" fill="#ececec" stroke="#111" stroke-width="2.4"/><path d="M7 12H17M12 7V17" stroke="#111" stroke-width="2.8"/></svg><svg class="a" style="left:125px;top:824px;" width="30" height="30" viewBox="0 0 32 32"><path d="M5 6H27L16 28Z" stroke="#2a160a" stroke-width="7" stroke-linejoin="round" fill="none"/><path d="M5 6H27L16 28Z" stroke="#f09030" stroke-width="4" stroke-linejoin="round" fill="none"/><path d="M6 5.5H26" stroke="#ffd9a0" stroke-width="1.5"/></svg><div class="a t " style="left:166px;top:828px;">Plane.013</div><div class="a " style="left:292.3468750000002px;top:824px;width:3px;height:30px;background:#5f5f5f"></div><svg class="a" style="left:317.347px;top:824px;opacity:0.5;" width="30" height="30" viewBox="0 0 32 32"><path d="M6 7H26L16 27Z" stroke="#1c1c1c" stroke-width="2.2" fill="none"/><g fill="#f4f4f4" stroke="#1c1c1c" stroke-width="2"><circle cx="6" cy="7" r="3.4"/><circle cx="26" cy="7" r="3.4"/><circle cx="16" cy="27" r="3.4"/></g></svg><svg class="a" style="left:529px;top:825px;" width="28" height="28" viewBox="0 0 32 32"><path d="M5 16C10 12 22 12 27 16C22 20 10 20 5 16Z" fill="#8a8a8a" stroke="#6a6a6a" stroke-width="1.6"/></svg><svg class="a" style="left:570px;top:825px;" width="28" height="28" viewBox="0 0 32 32"><path d="M9 3L9 24L14 19.5L18.5 29L22.5 27L18 18L25 18Z" fill="#f6f6f6" stroke="#0c0c0c" stroke-width="2.6" stroke-linejoin="round"/></svg><svg class="a" style="left:608px;top:824px;" width="28" height="28" viewBox="0 0 32 32"><rect x="3" y="8" width="27" height="20" rx="2.5" fill="#f2f2f2" stroke="#0c0c0c" stroke-width="2.6"/><rect x="5" y="4" width="7" height="6" rx="2" fill="#f2f2f2" stroke="#0c0c0c" stroke-width="2"/><rect x="6" y="12" width="5" height="13" fill="#333"/><rect x="6" y="10" width="5" height="5" fill="#d02050"/><circle cx="19" cy="19" r="7" fill="#c8c8c8" stroke="#555" stroke-width="1.5"/><circle cx="19" cy="19" r="4.3" fill="#c01848"/><path d="M17 17A3 3 0 0 1 21 17" stroke="#501020" stroke-width="2" fill="none"/><rect x="24" y="10.5" width="4" height="3" fill="#111"/></svg><div class="a " style="left:59px;top:878px;width:28px;height:2px;background:#5e5e5e"></div><svg class="a" style="left:48px;top:868px;" width="22" height="22" viewBox="0 0 24 24"><circle cx="12" cy="12" r="8.3" fill="#ececec" stroke="#111" stroke-width="2.4"/><path d="M7 12H17M12 7V17" stroke="#111" stroke-width="2.8"/></svg><svg class="a" style="left:85px;top:864px;" width="30" height="30" viewBox="0 0 32 32"><path d="M16 4V18L5 25M16 18L27 24" stroke="#2a160a" stroke-width="6.5" stroke-linecap="round" fill="none"/><path d="M16 4V18L5 25M16 18L27 24" stroke="#f08c2c" stroke-width="3.4" stroke-linecap="round" fill="none"/><path d="M16 4V8M5 25L7 23.7M27 24L25 22.8" stroke="#ffe9c8" stroke-width="3" stroke-linecap="round"/></svg><div class="a t " style="left:126px;top:868px;">Physical_Sky_1</div><div class="a " style="left:305.453125px;top:864px;width:3px;height:30px;background:#5f5f5f"></div><svg class="a" style="left:330.453px;top:864px;opacity:0.42;" width="30" height="30" viewBox="0 0 32 32"><path d="M16 4V18L5 25M16 18L27 24" stroke="#2a160a" stroke-width="6.5" stroke-linecap="round" fill="none"/><path d="M16 4V18L5 25M16 18L27 24" stroke="#f08c2c" stroke-width="3.4" stroke-linecap="round" fill="none"/><path d="M16 4V8M5 25L7 23.7M27 24L25 22.8" stroke="#ffe9c8" stroke-width="3" stroke-linecap="round"/></svg><svg class="a" style="left:370.453px;top:864px;opacity:0.42;" width="30" height="30" viewBox="0 0 32 32"><circle cx="16" cy="11.5" r="9" fill="#e9a858" stroke="#2a160a" stroke-width="2"/><circle cx="13" cy="8.5" r="4.5" fill="#fbe3bd" opacity=".85"/><path d="M12 14L14 20M20 14L18 20" stroke="#8a4a14" stroke-width="1.5"/><rect x="11" y="20" width="10" height="9" rx="2" fill="#f3ead8" stroke="#2a160a" stroke-width="2"/><path d="M11 23H21M11 26H21" stroke="#8a5a30" stroke-width="1.6"/></svg><svg class="a" style="left:410.453px;top:864px;opacity:0.42;" width="30" height="30" viewBox="0 0 32 32"><path d="M16 4V18L5 25M16 18L27 24" stroke="#2a160a" stroke-width="6.5" stroke-linecap="round" fill="none"/><path d="M16 4V18L5 25M16 18L27 24" stroke="#f08c2c" stroke-width="3.4" stroke-linecap="round" fill="none"/><path d="M16 4V8M5 25L7 23.7M27 24L25 22.8" stroke="#ffe9c8" stroke-width="3" stroke-linecap="round"/></svg><svg class="a" style="left:450.453px;top:864px;opacity:0.42;" width="30" height="30" viewBox="0 0 32 32"><path d="M16 4V18L5 25M16 18L27 24" stroke="#2a160a" stroke-width="6.5" stroke-linecap="round" fill="none"/><path d="M16 4V18L5 25M16 18L27 24" stroke="#f08c2c" stroke-width="3.4" stroke-linecap="round" fill="none"/><path d="M16 4V8M5 25L7 23.7M27 24L25 22.8" stroke="#ffe9c8" stroke-width="3" stroke-linecap="round"/></svg><svg class="a" style="left:490.453px;top:864px;opacity:0.42;" width="30" height="30" viewBox="0 0 32 32"><circle cx="16" cy="11.5" r="9" fill="#e9a858" stroke="#2a160a" stroke-width="2"/><circle cx="13" cy="8.5" r="4.5" fill="#fbe3bd" opacity=".85"/><path d="M12 14L14 20M20 14L18 20" stroke="#8a4a14" stroke-width="1.5"/><rect x="11" y="20" width="10" height="9" rx="2" fill="#f3ead8" stroke="#2a160a" stroke-width="2"/><path d="M11 23H21M11 26H21" stroke="#8a5a30" stroke-width="1.6"/></svg><svg class="a" style="left:529px;top:865px;" width="28" height="28" viewBox="0 0 32 32"><path d="M3 16C8 8 24 8 29 16C24 24 8 24 3 16Z" fill="#f4f4f4" stroke="#111" stroke-width="2.4"/><circle cx="16" cy="15" r="4.2" fill="#111"/><path d="M9 19C13 22 19 22 23 19" stroke="#999" stroke-width="1.5" fill="none"/></svg><svg class="a" style="left:570px;top:865px;" width="28" height="28" viewBox="0 0 32 32"><path d="M9 3L9 24L14 19.5L18.5 29L22.5 27L18 18L25 18Z" fill="#f6f6f6" stroke="#0c0c0c" stroke-width="2.6" stroke-linejoin="round"/></svg><svg class="a" style="left:608px;top:864px;" width="28" height="28" viewBox="0 0 32 32"><rect x="3" y="8" width="27" height="20" rx="2.5" fill="#f2f2f2" stroke="#0c0c0c" stroke-width="2.6"/><rect x="5" y="4" width="7" height="6" rx="2" fill="#f2f2f2" stroke="#0c0c0c" stroke-width="2"/><rect x="6" y="12" width="5" height="13" fill="#333"/><rect x="6" y="10" width="5" height="5" fill="#d02050"/><circle cx="19" cy="19" r="7" fill="#c8c8c8" stroke="#555" stroke-width="1.5"/><circle cx="19" cy="19" r="4.3" fill="#c01848"/><path d="M17 17A3 3 0 0 1 21 17" stroke="#501020" stroke-width="2" fill="none"/><rect x="24" y="10.5" width="4" height="3" fill="#111"/></svg><div class="a " style="left:59px;top:918px;width:28px;height:2px;background:#5e5e5e"></div><svg class="a" style="left:48px;top:908px;" width="22" height="22" viewBox="0 0 24 24"><circle cx="12" cy="12" r="8.3" fill="#ececec" stroke="#111" stroke-width="2.4"/><path d="M7 12H17M12 7V17" stroke="#111" stroke-width="2.8"/></svg><svg class="a" style="left:85px;top:904px;" width="30" height="30" viewBox="0 0 32 32"><path d="M5 6H27L16 28Z" stroke="#2a160a" stroke-width="7" stroke-linejoin="round" fill="none"/><path d="M5 6H27L16 28Z" stroke="#f09030" stroke-width="4" stroke-linejoin="round" fill="none"/><path d="M6 5.5H26" stroke="#ffd9a0" stroke-width="1.5"/></svg><div class="a t " style="left:126px;top:908px;">ROAD</div><div class="a " style="left:208.8734374999999px;top:904px;width:3px;height:30px;background:#5f5f5f"></div><svg class="a" style="left:233.873px;top:904px;opacity:0.5;" width="30" height="30" viewBox="0 0 32 32"><path d="M6 7H26L16 27Z" stroke="#1c1c1c" stroke-width="2.2" fill="none"/><g fill="#f4f4f4" stroke="#1c1c1c" stroke-width="2"><circle cx="6" cy="7" r="3.4"/><circle cx="26" cy="7" r="3.4"/><circle cx="16" cy="27" r="3.4"/></g></svg><svg class="a" style="left:273.873px;top:904px;opacity:0.42;" width="30" height="30" viewBox="0 0 32 32"><path d="M5 6H27L16 28Z" stroke="#2a160a" stroke-width="7" stroke-linejoin="round" fill="none"/><path d="M5 6H27L16 28Z" stroke="#f09030" stroke-width="4" stroke-linejoin="round" fill="none"/><path d="M6 5.5H26" stroke="#ffd9a0" stroke-width="1.5"/></svg><svg class="a" style="left:313.873px;top:904px;opacity:0.42;" width="30" height="30" viewBox="0 0 32 32"><path d="M5 6H27L16 28Z" stroke="#2a160a" stroke-width="7" stroke-linejoin="round" fill="none"/><path d="M5 6H27L16 28Z" stroke="#f09030" stroke-width="4" stroke-linejoin="round" fill="none"/><path d="M6 5.5H26" stroke="#ffd9a0" stroke-width="1.5"/></svg><svg class="a" style="left:353.873px;top:904px;opacity:0.42;" width="30" height="30" viewBox="0 0 32 32"><path d="M5 6H27L16 28Z" stroke="#2a160a" stroke-width="7" stroke-linejoin="round" fill="none"/><path d="M5 6H27L16 28Z" stroke="#f09030" stroke-width="4" stroke-linejoin="round" fill="none"/><path d="M6 5.5H26" stroke="#ffd9a0" stroke-width="1.5"/></svg><svg class="a" style="left:393.873px;top:904px;opacity:0.42;" width="30" height="30" viewBox="0 0 32 32"><path d="M5 6H27L16 28Z" stroke="#2a160a" stroke-width="7" stroke-linejoin="round" fill="none"/><path d="M5 6H27L16 28Z" stroke="#f09030" stroke-width="4" stroke-linejoin="round" fill="none"/><path d="M6 5.5H26" stroke="#ffd9a0" stroke-width="1.5"/></svg><svg class="a" style="left:529px;top:905px;" width="28" height="28" viewBox="0 0 32 32"><path d="M3 16C8 8 24 8 29 16C24 24 8 24 3 16Z" fill="#f4f4f4" stroke="#111" stroke-width="2.4"/><circle cx="16" cy="15" r="4.2" fill="#111"/><path d="M9 19C13 22 19 22 23 19" stroke="#999" stroke-width="1.5" fill="none"/></svg><svg class="a" style="left:570px;top:905px;" width="28" height="28" viewBox="0 0 32 32"><path d="M9 3L9 24L14 19.5L18.5 29L22.5 27L18 18L25 18Z" fill="#f6f6f6" stroke="#0c0c0c" stroke-width="2.6" stroke-linejoin="round"/></svg><svg class="a" style="left:608px;top:904px;" width="28" height="28" viewBox="0 0 32 32"><rect x="3" y="8" width="27" height="20" rx="2.5" fill="#f2f2f2" stroke="#0c0c0c" stroke-width="2.6"/><rect x="5" y="4" width="7" height="6" rx="2" fill="#f2f2f2" stroke="#0c0c0c" stroke-width="2"/><rect x="6" y="12" width="5" height="13" fill="#333"/><rect x="6" y="10" width="5" height="5" fill="#d02050"/><circle cx="19" cy="19" r="7" fill="#c8c8c8" stroke="#555" stroke-width="1.5"/><circle cx="19" cy="19" r="4.3" fill="#c01848"/><path d="M17 17A3 3 0 0 1 21 17" stroke="#501020" stroke-width="2" fill="none"/><rect x="24" y="10.5" width="4" height="3" fill="#111"/></svg><div class="a " style="left:643px;top:11px;width:25px;height:924px;background:#5a5a5a;border-radius:12px;border:2px solid #4c4c4c;box-sizing:border-box"></div><div class="a " style="left:644px;top:536px;width:23px;height:395px;background:linear-gradient(90deg,#868686,#929292);border-radius:11px;border:2px solid #555;box-sizing:border-box"></div></div><div class="a " style="left:2606px;top:1085px;width:676px;height:5px;background:#1e1e1e"></div><div class="a " style="left:2606px;top:1090px;width:676px;height:48px;background:#727272"></div><div class="a " style="left:2606px;top:1090px;width:676px;height:2px;background:#808080"></div><div class="a w menu" style="left:2624px;top:1096px;width:63px;height:39px;border-radius:8px;"></div><svg class="a" style="left:2667px;top:1103px" width="12" height="26" viewBox="0 0 12 26"><path d="M6 1 L11 10 L1 10Z M6 25 L11 16 L1 16Z" fill="#9a9a9a"/></svg><svg class="a" style="left:2630px;top:1099px;" width="32" height="32" viewBox="0 0 32 32"><rect x="3" y="5" width="26" height="9" rx="4.5" fill="#555" stroke="#eee" stroke-width="2"/><rect x="17" y="5" width="12" height="9" rx="4.5" fill="#eee"/><rect x="3" y="18" width="26" height="9" rx="4.5" fill="#eee" stroke="#eee" stroke-width="2"/><path d="M8 22.5H24" stroke="#222" stroke-width="3"/><path d="M6 22.5L9 20V25ZM26 22.5L23 20V25Z" fill="#222"/></svg><div class="a w menu" style="left:2704px;top:1096px;width:42px;height:39px;border-radius:8px 0 0 8px;"></div><svg class="a" style="left:2709px;top:1100px;opacity:0.55;" width="30" height="30" viewBox="0 0 32 32"><rect x="3" y="9" width="26" height="18" rx="2" fill="#8a8a8a" stroke="#333" stroke-width="2"/><rect x="5" y="5" width="8" height="5" fill="#9a9a9a" stroke="#333" stroke-width="1.5"/><circle cx="18" cy="18" r="6.5" fill="#6a6a6a" stroke="#2a2a2a" stroke-width="2"/><circle cx="18" cy="18" r="3" fill="#444"/></svg><div class="a w menu" style="left:2744px;top:1096px;width:42px;height:39px;border-radius:0;"></div><svg class="a" style="left:2749px;top:1100px;opacity:0.55;" width="30" height="30" viewBox="0 0 32 32"><rect x="9" y="9" width="20" height="19" fill="#8a8a8a" stroke="#333" stroke-width="2" transform="rotate(8 19 18)"/><rect x="3" y="3" width="21" height="19" fill="#b8b0b8" stroke="#333" stroke-width="2"/><rect x="6" y="6" width="15" height="13" fill="#7f86a8"/><circle cx="13.5" cy="10" r="3" fill="#3a4a9a"/><rect x="11" y="12" width="5" height="7" fill="#3a4a9a"/></svg><div class="a w menu" style="left:2784px;top:1096px;width:42px;height:39px;border-radius:0;"></div><svg class="a" style="left:2789px;top:1100px;opacity:0.55;" width="30" height="30" viewBox="0 0 32 32"><rect x="4" y="4" width="8" height="8" fill="#8a9a4a"/><rect x="20" y="6" width="9" height="15" rx="2" fill="#4a6a9a"/><circle cx="14" cy="22" r="6.5" fill="#9a9a9a" stroke="#444" stroke-width="1.5"/><circle cx="12" cy="20" r="2.5" fill="#ddd"/></svg><div class="a w menu" style="left:2824px;top:1096px;width:42px;height:39px;border-radius:0;"></div><svg class="a" style="left:2829px;top:1100px;opacity:0.55;" width="30" height="30" viewBox="0 0 32 32"><circle cx="16" cy="16" r="12" fill="#5a7aa8" stroke="#3a3a3a" stroke-width="2"/><path d="M8 10C12 6 18 8 17 13C16 17 10 16 8 20C6 16 6 13 8 10Z M20 14C25 13 27 17 25 21C23 24 19 22 20 14Z" fill="#5a8a5a"/><path d="M8 8A12 12 0 0 1 20 5" stroke="#b8c8d8" stroke-width="2.5" fill="none"/></svg><div class="a w menu" style="left:2864px;top:1096px;width:42px;height:39px;border-radius:0;"></div><svg class="a" style="left:2869px;top:1100px;opacity:0.55;" width="30" height="30" viewBox="0 0 32 32"><path d="M16 3L28 8V23L16 29L4 23V8Z" fill="#c89858" stroke="#5a3a1a" stroke-width="2" stroke-linejoin="round"/><path d="M16 3L28 8L16 14L4 8Z" fill="#e8c898"/><path d="M4 8L16 14V29L4 23Z" fill="#d08a4a"/><path d="M16 14V29" stroke="#5a3a1a" stroke-width="1.2"/></svg><div class="a w menu" style="left:2904px;top:1096px;width:42px;height:39px;border-radius:0;"></div><svg class="a" style="left:2909px;top:1100px;opacity:0.55;" width="30" height="30" viewBox="0 0 32 32"><rect x="3" y="13" width="15" height="9" rx="4.5" fill="none" stroke="#2a2a2a" stroke-width="5" transform="rotate(-28 10 17)"/><rect x="3" y="13" width="15" height="9" rx="4.5" fill="none" stroke="#b0b0b0" stroke-width="2.4" transform="rotate(-28 10 17)"/><rect x="14" y="9" width="15" height="9" rx="4.5" fill="none" stroke="#2a2a2a" stroke-width="5" transform="rotate(-28 21 13)"/><rect x="14" y="9" width="15" height="9" rx="4.5" fill="none" stroke="#b0b0b0" stroke-width="2.4" transform="rotate(-28 21 13)"/></svg><div class="a w menu" style="left:2944px;top:1096px;width:42px;height:39px;border-radius:0;"></div><svg class="a" style="left:2949px;top:1100px;opacity:0.55;" width="30" height="30" viewBox="0 0 32 32"><path d="M5 27L19 12" stroke="#2a2a2a" stroke-width="8" stroke-linecap="round"/><path d="M5 27L19 12" stroke="#5a7ab0" stroke-width="4.6" stroke-linecap="round"/><path d="M17 10A6.5 6.5 0 1 1 24 16" stroke="#2a2a2a" stroke-width="6.5" fill="none"/><path d="M17 10A6.5 6.5 0 1 1 24 16" stroke="#9ab0d0" stroke-width="3.4" fill="none"/></svg><div class="a w menu" style="left:2984px;top:1096px;width:42px;height:39px;border-radius:0;background:linear-gradient(#4d76b8,#6890d2)"></div><svg class="a" style="left:2989px;top:1100px;" width="30" height="30" viewBox="0 0 32 32"><path d="M13 6C28 7 28 22 9 27" stroke="#111" stroke-width="5" fill="none"/><path d="M13 6C28 7 28 22 9 27" stroke="#f4f4f4" stroke-width="2.4" fill="none"/><g fill="#fff" stroke="#111" stroke-width="1.6"><rect x="9" y="2.5" width="7.5" height="7.5"/><rect x="3" y="23" width="7.5" height="7.5"/></g></svg><div class="a w menu" style="left:3024px;top:1096px;width:42px;height:39px;border-radius:0;"></div><svg class="a" style="left:3029px;top:1100px;opacity:0.55;" width="30" height="30" viewBox="0 0 32 32"><circle cx="16" cy="16" r="12" fill="#8a8a8a" stroke="#333" stroke-width="2"/><path d="M16 16H28A12 12 0 0 1 16 28Z" fill="#a87858"/><path d="M16 16V4A12 12 0 0 1 28 16Z" fill="#a86878" opacity=".8"/><circle cx="11" cy="11" r="4" fill="#c8c8c8" opacity=".8"/></svg><div class="a w menu" style="left:3064px;top:1096px;width:42px;height:39px;border-radius:0;"></div><svg class="a" style="left:3069px;top:1100px;opacity:0.55;" width="30" height="30" viewBox="0 0 32 32"><rect x="4" y="4" width="24" height="24" fill="#d8c8c0" stroke="#444" stroke-width="1.5"/><g fill="#a83848"><rect x="4" y="4" width="6" height="6"/><rect x="16" y="4" width="6" height="6"/><rect x="10" y="10" width="6" height="6"/><rect x="22" y="10" width="6" height="6"/><rect x="4" y="16" width="6" height="6"/><rect x="16" y="16" width="6" height="6"/><rect x="10" y="22" width="6" height="6"/><rect x="22" y="22" width="6" height="6"/></g></svg><div class="a w menu" style="left:3104px;top:1096px;width:40px;height:39px;border-radius:0 8px 8px 0;"></div><svg class="a" style="left:3109px;top:1100px;opacity:0.55;" width="30" height="30" viewBox="0 0 32 32"><circle cx="23" cy="8" r="6" fill="#b0b0b0" stroke="#444" stroke-width="1.5"/><path d="M6 14L13 26L19 13" stroke="#4a4a8a" stroke-width="5" fill="none" stroke-linecap="round" stroke-linejoin="round"/></svg><div class="a" style="left:2606px;top:1138px;width:676px;height:915px;overflow:hidden;background:#797979"><div class="a " style="left:20px;top:-2px;width:12px;height:8px;background:#ddd;border-radius:0 0 6px 6px;border:2px solid #333;border-top:none;box-sizing:border-box"></div><div class="a " style="left:74px;top:-2px;width:12px;height:8px;background:#ddd;border-radius:0 0 6px 6px;border:2px solid #333;border-top:none;box-sizing:border-box"></div><div class="a " style="left:156px;top:-2px;width:12px;height:8px;background:#ddd;border-radius:0 0 6px 6px;border:2px solid #333;border-top:none;box-sizing:border-box"></div><div class="a " style="left:486px;top:-2px;width:12px;height:8px;background:#ddd;border-radius:0 0 6px 6px;border:2px solid #333;border-top:none;box-sizing:border-box"></div><div class="a " style="left:194px;top:2px;width:300px;height:2px;background:#5e5e5e"></div><div class="a w menu" style="left:17px;top:47px;width:65px;height:39px;border-radius:8px 0 0 8px;"></div><svg class="a" style="left:61px;top:54px" width="12" height="26" viewBox="0 0 12 26"><path d="M6 1 L11 10 L1 10Z M6 25 L11 16 L1 16Z" fill="#9a9a9a"/></svg><svg class="a" style="left:24px;top:51px;" width="30" height="30" viewBox="0 0 32 32"><path d="M13 5C27 6 27 21 9 26" stroke="#111" stroke-width="4.5" fill="none"/><path d="M13 5C27 6 27 21 9 26" stroke="#f4f4f4" stroke-width="2.2" fill="none"/><g fill="#fff" stroke="#111" stroke-width="1.6"><rect x="9" y="1.5" width="7" height="7"/><rect x="3" y="22" width="7" height="7"/></g></svg><div class="a w txt" style="left:80px;top:47px;width:468px;height:39px;border-radius:0;"></div><div class="a t " style="left:94px;top:57px;">NurbsPath.001</div><div class="a w reg" style="left:546px;top:47px;width:80px;height:39px;border-radius:0 8px 8px 0;"></div><div class="a t " style="left:186px;width:800px;text-align:center;top:57px;">F</div><div class="a " style="left:6px;top:100px;width:632px;height:2px;background:#676767"></div><div class="a " style="left:6px;top:102px;width:632px;height:2px;background:#7c7c7c"></div><svg class="a" style="left:20px;top:115px;" width="16" height="16" viewBox="0 0 16 16"><path d="M1 2H15L8 15Z" fill="#222"/></svg><div class="a t sh" style="left:45px;top:111px;font-size:23.5px;">Shape</div><svg class="a" style="left:604px;top:119px;" width="20" height="10" viewBox="0 0 20 10"><rect x="0" y="0" width="2" height="2" fill="#5a5a5a"/><rect x="0" y="4" width="2" height="2" fill="#5a5a5a"/><rect x="0" y="8" width="2" height="2" fill="#5a5a5a"/><rect x="3" y="0" width="2" height="2" fill="#5a5a5a"/><rect x="3" y="4" width="2" height="2" fill="#5a5a5a"/><rect x="3" y="8" width="2" height="2" fill="#5a5a5a"/><rect x="6" y="0" width="2" height="2" fill="#5a5a5a"/><rect x="6" y="4" width="2" height="2" fill="#5a5a5a"/><rect x="6" y="8" width="2" height="2" fill="#5a5a5a"/><rect x="9" y="0" width="2" height="2" fill="#5a5a5a"/><rect x="9" y="4" width="2" height="2" fill="#5a5a5a"/><rect x="9" y="8" width="2" height="2" fill="#5a5a5a"/><rect x="12" y="0" width="2" height="2" fill="#5a5a5a"/><rect x="12" y="4" width="2" height="2" fill="#5a5a5a"/><rect x="12" y="8" width="2" height="2" fill="#5a5a5a"/><rect x="15" y="0" width="2" height="2" fill="#5a5a5a"/><rect x="15" y="4" width="2" height="2" fill="#5a5a5a"/><rect x="15" y="8" width="2" height="2" fill="#5a5a5a"/><rect x="18" y="0" width="2" height="2" fill="#5a5a5a"/><rect x="18" y="4" width="2" height="2" fill="#5a5a5a"/><rect x="18" y="8" width="2" height="2" fill="#5a5a5a"/></svg><div class="a w radio" style="left:17px;top:162px;width:304px;height:40px;border-radius:8px 0 0 8px;"></div><div class="a t " style="left:-232px;width:800px;text-align:center;top:173px;color:#fff;">2D</div><div class="a w radio" style="left:319px;top:162px;width:307px;height:40px;border-radius:0 8px 8px 0;background:linear-gradient(#4d76b8,#6890d2)"></div><div class="a t " style="left:72px;width:800px;text-align:center;top:173px;">3D</div><div class="a t " style="left:32px;top:222px;">Resolution:</div><div class="a t " style="left:346px;top:222px;">Fill:</div><div class="a w num" style="left:17px;top:256px;width:296px;height:40px;border-radius:20px 20px 0 0;"></div><div class="a t " style="left:49px;top:266px;">Preview U:</div><div class="a t " style="left:-719px;width:1000px;text-align:right;top:266px;">12</div><svg class="a" style="left:27px;top:269px;" width="10" height="14" viewBox="0 0 10 14"><path d="M9 0L1 7L9 14Z" fill="#8a8a8a"/></svg><svg class="a" style="left:293px;top:269px;" width="10" height="14" viewBox="0 0 10 14"><path d="M1 0L9 7L1 14Z" fill="#8a8a8a"/></svg><div class="a w num" style="left:17px;top:294px;width:296px;height:41px;border-radius:0 0 20px 20px;"></div><div class="a t " style="left:49px;top:305px;">Render U:</div><div class="a t " style="left:-719px;width:1000px;text-align:right;top:305px;">0</div><svg class="a" style="left:27px;top:307px;" width="10" height="14" viewBox="0 0 10 14"><path d="M9 0L1 7L9 14Z" fill="#8a8a8a"/></svg><svg class="a" style="left:293px;top:307px;" width="10" height="14" viewBox="0 0 10 14"><path d="M1 0L9 7L1 14Z" fill="#8a8a8a"/></svg><div class="a w menu" style="left:329px;top:256px;width:297px;height:39px;border-radius:8px;"></div><div class="a t " style="left:345px;top:266px;color:#fff;">Half</div><svg class="a" style="left:606px;top:263px" width="12" height="26" viewBox="0 0 12 26"><path d="M6 1 L11 10 L1 10Z M6 25 L11 16 L1 16Z" fill="#9a9a9a"/></svg><div class="a w chk" style="left:335px;top:307px;width:28px;height:27px;border-radius:8px;border-radius:8px"></div><svg class="a" style="left:337px;top:299px;" width="34" height="34" viewBox="0 0 34 34"><path d="M4.5 21L11 28L23 11.5" stroke="#222" stroke-width="6" fill="none" stroke-linecap="round" stroke-linejoin="round" opacity=".5"/><path d="M4.5 21L11 28L23 11.5" stroke="#f4f4f4" stroke-width="3" fill="none" stroke-linecap="round" stroke-linejoin="round"/></svg><div class="a t " style="left:379px;top:309px;color:#fff;">Fill Deformed</div><div class="a t " style="left:32px;top:351px;">Twisting:</div><div class="a t " style="left:346px;top:354px;">Path/Curve-Deform:</div><div class="a w menu" style="left:17px;top:384px;width:296px;height:39px;border-radius:8px;"></div><div class="a t " style="left:32px;top:394px;color:#fff;">Minimum</div><svg class="a" style="left:293px;top:391px" width="12" height="26" viewBox="0 0 12 26"><path d="M6 1 L11 10 L1 10Z M6 25 L11 16 L1 16Z" fill="#9a9a9a"/></svg><div class="a w chk" style="left:335px;top:394px;width:28px;height:27px;border-radius:8px;border-radius:8px"></div><svg class="a" style="left:337px;top:386px;" width="34" height="34" viewBox="0 0 34 34"><path d="M4.5 21L11 28L23 11.5" stroke="#222" stroke-width="6" fill="none" stroke-linecap="round" stroke-linejoin="round" opacity=".5"/><path d="M4.5 21L11 28L23 11.5" stroke="#f4f4f4" stroke-width="3" fill="none" stroke-linecap="round" stroke-linejoin="round"/></svg><div class="a t " style="left:379px;top:397px;color:#fff;">Radius</div><div class="a w chk" style="left:490px;top:394px;width:28px;height:27px;border-radius:8px;border-radius:8px"></div><div class="a t " style="left:535px;top:397px;">Stretch</div><div class="a w num" style="left:17px;top:429px;width:296px;height:39px;border-radius:19px;"></div><div class="a t " style="left:49px;top:438px;">Smooth:</div><div class="a t " style="left:-719px;width:1000px;text-align:right;top:438px;">0.00</div><svg class="a" style="left:27px;top:441px;" width="10" height="14" viewBox="0 0 10 14"><path d="M9 0L1 7L9 14Z" fill="#8a8a8a"/></svg><svg class="a" style="left:293px;top:441px;" width="10" height="14" viewBox="0 0 10 14"><path d="M1 0L9 7L1 14Z" fill="#8a8a8a"/></svg><div class="a w chk" style="left:335px;top:439px;width:28px;height:27px;border-radius:8px;border-radius:8px"></div><div class="a t " style="left:379px;top:442px;">Bounds Clamp</div><div class="a " style="left:6px;top:487px;width:632px;height:2px;background:#676767"></div><div class="a " style="left:6px;top:489px;width:632px;height:2px;background:#7c7c7c"></div><svg class="a" style="left:20px;top:501px;" width="16" height="16" viewBox="0 0 16 16"><path d="M2 1V15L15 8Z" fill="#222"/></svg><div class="a t sh" style="left:45px;top:497px;font-size:23.5px;">Texture Space</div><svg class="a" style="left:604px;top:505px;" width="20" height="10" viewBox="0 0 20 10"><rect x="0" y="0" width="2" height="2" fill="#5a5a5a"/><rect x="0" y="4" width="2" height="2" fill="#5a5a5a"/><rect x="0" y="8" width="2" height="2" fill="#5a5a5a"/><rect x="3" y="0" width="2" height="2" fill="#5a5a5a"/><rect x="3" y="4" width="2" height="2" fill="#5a5a5a"/><rect x="3" y="8" width="2" height="2" fill="#5a5a5a"/><rect x="6" y="0" width="2" height="2" fill="#5a5a5a"/><rect x="6" y="4" width="2" height="2" fill="#5a5a5a"/><rect x="6" y="8" width="2" height="2" fill="#5a5a5a"/><rect x="9" y="0" width="2" height="2" fill="#5a5a5a"/><rect x="9" y="4" width="2" height="2" fill="#5a5a5a"/><rect x="9" y="8" width="2" height="2" fill="#5a5a5a"/><rect x="12" y="0" width="2" height="2" fill="#5a5a5a"/><rect x="12" y="4" width="2" height="2" fill="#5a5a5a"/><rect x="12" y="8" width="2" height="2" fill="#5a5a5a"/><rect x="15" y="0" width="2" height="2" fill="#5a5a5a"/><rect x="15" y="4" width="2" height="2" fill="#5a5a5a"/><rect x="15" y="8" width="2" height="2" fill="#5a5a5a"/><rect x="18" y="0" width="2" height="2" fill="#5a5a5a"/><rect x="18" y="4" width="2" height="2" fill="#5a5a5a"/><rect x="18" y="8" width="2" height="2" fill="#5a5a5a"/></svg><div class="a " style="left:6px;top:530px;width:632px;height:2px;background:#676767"></div><div class="a " style="left:6px;top:532px;width:632px;height:2px;background:#7c7c7c"></div><svg class="a" style="left:20px;top:545px;" width="16" height="16" viewBox="0 0 16 16"><path d="M1 2H15L8 15Z" fill="#222"/></svg><div class="a t sh" style="left:45px;top:541px;font-size:23.5px;">Geometry</div><svg class="a" style="left:604px;top:549px;" width="20" height="10" viewBox="0 0 20 10"><rect x="0" y="0" width="2" height="2" fill="#5a5a5a"/><rect x="0" y="4" width="2" height="2" fill="#5a5a5a"/><rect x="0" y="8" width="2" height="2" fill="#5a5a5a"/><rect x="3" y="0" width="2" height="2" fill="#5a5a5a"/><rect x="3" y="4" width="2" height="2" fill="#5a5a5a"/><rect x="3" y="8" width="2" height="2" fill="#5a5a5a"/><rect x="6" y="0" width="2" height="2" fill="#5a5a5a"/><rect x="6" y="4" width="2" height="2" fill="#5a5a5a"/><rect x="6" y="8" width="2" height="2" fill="#5a5a5a"/><rect x="9" y="0" width="2" height="2" fill="#5a5a5a"/><rect x="9" y="4" width="2" height="2" fill="#5a5a5a"/><rect x="9" y="8" width="2" height="2" fill="#5a5a5a"/><rect x="12" y="0" width="2" height="2" fill="#5a5a5a"/><rect x="12" y="4" width="2" height="2" fill="#5a5a5a"/><rect x="12" y="8" width="2" height="2" fill="#5a5a5a"/><rect x="15" y="0" width="2" height="2" fill="#5a5a5a"/><rect x="15" y="4" width="2" height="2" fill="#5a5a5a"/><rect x="15" y="8" width="2" height="2" fill="#5a5a5a"/><rect x="18" y="0" width="2" height="2" fill="#5a5a5a"/><rect x="18" y="4" width="2" height="2" fill="#5a5a5a"/><rect x="18" y="8" width="2" height="2" fill="#5a5a5a"/></svg><div class="a t " style="left:32px;top:601px;">Modification:</div><div class="a t " style="left:346px;top:601px;">Bevel:</div><div class="a w num" style="left:17px;top:638px;width:296px;height:38px;border-radius:19px;"></div><div class="a t " style="left:49px;top:646px;">Offset:</div><div class="a t " style="left:-719px;width:1000px;text-align:right;top:646px;">0.000</div><svg class="a" style="left:27px;top:650px;" width="10" height="14" viewBox="0 0 10 14"><path d="M9 0L1 7L9 14Z" fill="#8a8a8a"/></svg><svg class="a" style="left:293px;top:650px;" width="10" height="14" viewBox="0 0 10 14"><path d="M1 0L9 7L1 14Z" fill="#8a8a8a"/></svg><div class="a w num" style="left:329px;top:638px;width:297px;height:38px;border-radius:19px;"></div><div class="a t " style="left:361px;top:646px;">Depth:</div><div class="a t " style="left:-406px;width:1000px;text-align:right;top:646px;">0.000</div><svg class="a" style="left:339px;top:650px;" width="10" height="14" viewBox="0 0 10 14"><path d="M9 0L1 7L9 14Z" fill="#8a8a8a"/></svg><svg class="a" style="left:606px;top:650px;" width="10" height="14" viewBox="0 0 10 14"><path d="M1 0L9 7L1 14Z" fill="#8a8a8a"/></svg><div class="a w num" style="left:17px;top:682px;width:296px;height:38px;border-radius:19px;"></div><div class="a t " style="left:49px;top:690px;">Extrude:</div><div class="a t " style="left:-719px;width:1000px;text-align:right;top:690px;">0.000</div><svg class="a" style="left:27px;top:694px;" width="10" height="14" viewBox="0 0 10 14"><path d="M9 0L1 7L9 14Z" fill="#8a8a8a"/></svg><svg class="a" style="left:293px;top:694px;" width="10" height="14" viewBox="0 0 10 14"><path d="M1 0L9 7L1 14Z" fill="#8a8a8a"/></svg><div class="a w num" style="left:329px;top:682px;width:297px;height:38px;border-radius:19px;"></div><div class="a t " style="left:361px;top:690px;">Resolution:</div><div class="a t " style="left:-406px;width:1000px;text-align:right;top:690px;">0</div><svg class="a" style="left:339px;top:694px;" width="10" height="14" viewBox="0 0 10 14"><path d="M9 0L1 7L9 14Z" fill="#8a8a8a"/></svg><svg class="a" style="left:606px;top:694px;" width="10" height="14" viewBox="0 0 10 14"><path d="M1 0L9 7L1 14Z" fill="#8a8a8a"/></svg><div class="a t " style="left:32px;top:734px;">Taper Object:</div><div class="a t " style="left:346px;top:734px;">Bevel Object:</div><div class="a w txt" style="left:17px;top:769px;width:296px;height:39px;border-radius:8px;"></div><div class="a w txt" style="left:329px;top:769px;width:297px;height:39px;border-radius:8px;"></div><svg class="a" style="left:27px;top:774px;" width="28" height="28" viewBox="0 0 32 32"><path d="M16 3L28 8V23L16 29L4 23V8Z" fill="#f0a848" stroke="#3a2008" stroke-width="2" stroke-linejoin="round"/><path d="M16 3L28 8L16 14L4 8Z" fill="#ffe8c0"/><path d="M4 8L16 14V29L4 23Z" fill="#f8c078"/><path d="M16 14V29M4 8L16 14L28 8" stroke="#3a2008" stroke-width="1.3" fill="none"/></svg><svg class="a" style="left:340px;top:774px;" width="28" height="28" viewBox="0 0 32 32"><path d="M16 3L28 8V23L16 29L4 23V8Z" fill="#f0a848" stroke="#3a2008" stroke-width="2" stroke-linejoin="round"/><path d="M16 3L28 8L16 14L4 8Z" fill="#ffe8c0"/><path d="M4 8L16 14V29L4 23Z" fill="#f8c078"/><path d="M16 14V29M4 8L16 14L28 8" stroke="#3a2008" stroke-width="1.3" fill="none"/></svg><svg class="a" style="left:280px;top:773px;" width="28" height="28" viewBox="0 0 32 32"><path d="M4 28L7 20L18 9L23 14L12 25Z" fill="#e8e8e8" stroke="#111" stroke-width="2" stroke-linejoin="round"/><path d="M17 6L26 15" stroke="#111" stroke-width="4.5" stroke-linecap="round"/><path d="M20 11L26 4A3.5 3.5 0 0 1 29 8L23 13Z" fill="#222" stroke="#111" stroke-width="2"/></svg><svg class="a" style="left:592px;top:773px;" width="28" height="28" viewBox="0 0 32 32"><path d="M4 28L7 20L18 9L23 14L12 25Z" fill="#e8e8e8" stroke="#111" stroke-width="2" stroke-linejoin="round"/><path d="M17 6L26 15" stroke="#111" stroke-width="4.5" stroke-linecap="round"/><path d="M20 11L26 4A3.5 3.5 0 0 1 29 8L23 13Z" fill="#222" stroke="#111" stroke-width="2"/></svg><div class="a t " style="left:32px;top:828px;">Bevel Factor:</div><div class="a w menu" style="left:17px;top:869px;width:304px;height:39px;border-radius:8px 0 0 8px;opacity:.55"></div><div class="a t " style="left:32px;top:879px;color:#aaa;">Resolution</div><svg class="a" style="left:299px;top:876px" width="12" height="26" viewBox="0 0 12 26"><path d="M6 1 L11 10 L1 10Z M6 25 L11 16 L1 16Z" fill="#777"/></svg><div class="a w num" style="left:319px;top:869px;width:307px;height:39px;border-radius:0 19px 19px 0;opacity:.6"></div><div class="a t " style="left:350px;top:879px;color:#555;">Start:</div><div class="a t " style="left:-406px;width:1000px;text-align:right;top:879px;color:#555;">0.000</div><div class="a " style="left:643px;top:14px;width:25px;height:892px;background:#5a5a5a;border-radius:12px;border:2px solid #4c4c4c;box-sizing:border-box"></div><div class="a " style="left:644px;top:36px;width:23px;height:436px;background:linear-gradient(90deg,#868686,#929292);border-radius:11px;border:2px solid #555;box-sizing:border-box"></div></div><svg class="a" style="left:2577px;top:98px;" width="24" height="24" viewBox="0 0 24 24"><path d="M13.5 0L24 10.5M6.5 0L24 17.5M-0.5 0L24 24.5" stroke="#a0a0a0" stroke-width="1.6" opacity=".45"/><path d="M16 0L24 8M9 0L24 15M2 0L24 22" stroke="#262626" stroke-width="2.2" opacity=".75"/></svg><svg class="a" style="left:3258px;top:43px;" width="24" height="24" viewBox="0 0 24 24"><path d="M13.5 0L24 10.5M6.5 0L24 17.5M-0.5 0L24 24.5" stroke="#a0a0a0" stroke-width="1.6" opacity=".45"/><path d="M16 0L24 8M9 0L24 15M2 0L24 22" stroke="#262626" stroke-width="2.2" opacity=".75"/></svg><svg class="a" style="left:3258px;top:99px;" width="24" height="24" viewBox="0 0 24 24"><path d="M13.5 0L24 10.5M6.5 0L24 17.5M-0.5 0L24 24.5" stroke="#a0a0a0" stroke-width="1.6" opacity=".45"/><path d="M16 0L24 8M9 0L24 15M2 0L24 22" stroke="#262626" stroke-width="2.2" opacity=".75"/></svg><svg class="a" style="left:3258px;top:1091px;" width="24" height="24" viewBox="0 0 24 24"><path d="M13.5 0L24 10.5M6.5 0L24 17.5M-0.5 0L24 24.5" stroke="#a0a0a0" stroke-width="1.6" opacity=".45"/><path d="M16 0L24 8M9 0L24 15M2 0L24 22" stroke="#262626" stroke-width="2.2" opacity=".75"/></svg><svg class="a" style="left:2577px;top:1871px;" width="24" height="24" viewBox="0 0 24 24"><path d="M13.5 0L24 10.5M6.5 0L24 17.5M-0.5 0L24 24.5" stroke="#a0a0a0" stroke-width="1.6" opacity=".45"/><path d="M16 0L24 8M9 0L24 15M2 0L24 22" stroke="#262626" stroke-width="2.2" opacity=".75"/></svg><svg class="a" style="left:0px;top:71px;" width="24" height="24" viewBox="0 0 24 24"><path d="M0 13.5L10.5 24M0 6.5L17.5 24M0 -0.5L24.5 24" stroke="#a0a0a0" stroke-width="1.6" opacity=".45"/><path d="M0 16L8 24M0 9L15 24M0 2L22 24" stroke="#262626" stroke-width="2.2" opacity=".75"/></svg><svg class="a" style="left:0px;top:1842px;" width="24" height="24" viewBox="0 0 24 24"><path d="M0 13.5L10.5 24M0 6.5L17.5 24M0 -0.5L24.5 24" stroke="#a0a0a0" stroke-width="1.6" opacity=".45"/><path d="M0 16L8 24M0 9L15 24M0 2L22 24" stroke="#262626" stroke-width="2.2" opacity=".75"/></svg><svg class="a" style="left:2607px;top:1061px;" width="24" height="24" viewBox="0 0 24 24"><path d="M0 13.5L10.5 24M0 6.5L17.5 24M0 -0.5L24.5 24" stroke="#a0a0a0" stroke-width="1.6" opacity=".45"/><path d="M0 16L8 24M0 9L15 24M0 2L22 24" stroke="#262626" stroke-width="2.2" opacity=".75"/></svg><svg class="a" style="left:2607px;top:2029px;" width="24" height="24" viewBox="0 0 24 24"><path d="M0 13.5L10.5 24M0 6.5L17.5 24M0 -0.5L24.5 24" stroke="#a0a0a0" stroke-width="1.6" opacity=".45"/><path d="M0 16L8 24M0 9L15 24M0 2L22 24" stroke="#262626" stroke-width="2.2" opacity=".75"/></svg></div></body></html>
